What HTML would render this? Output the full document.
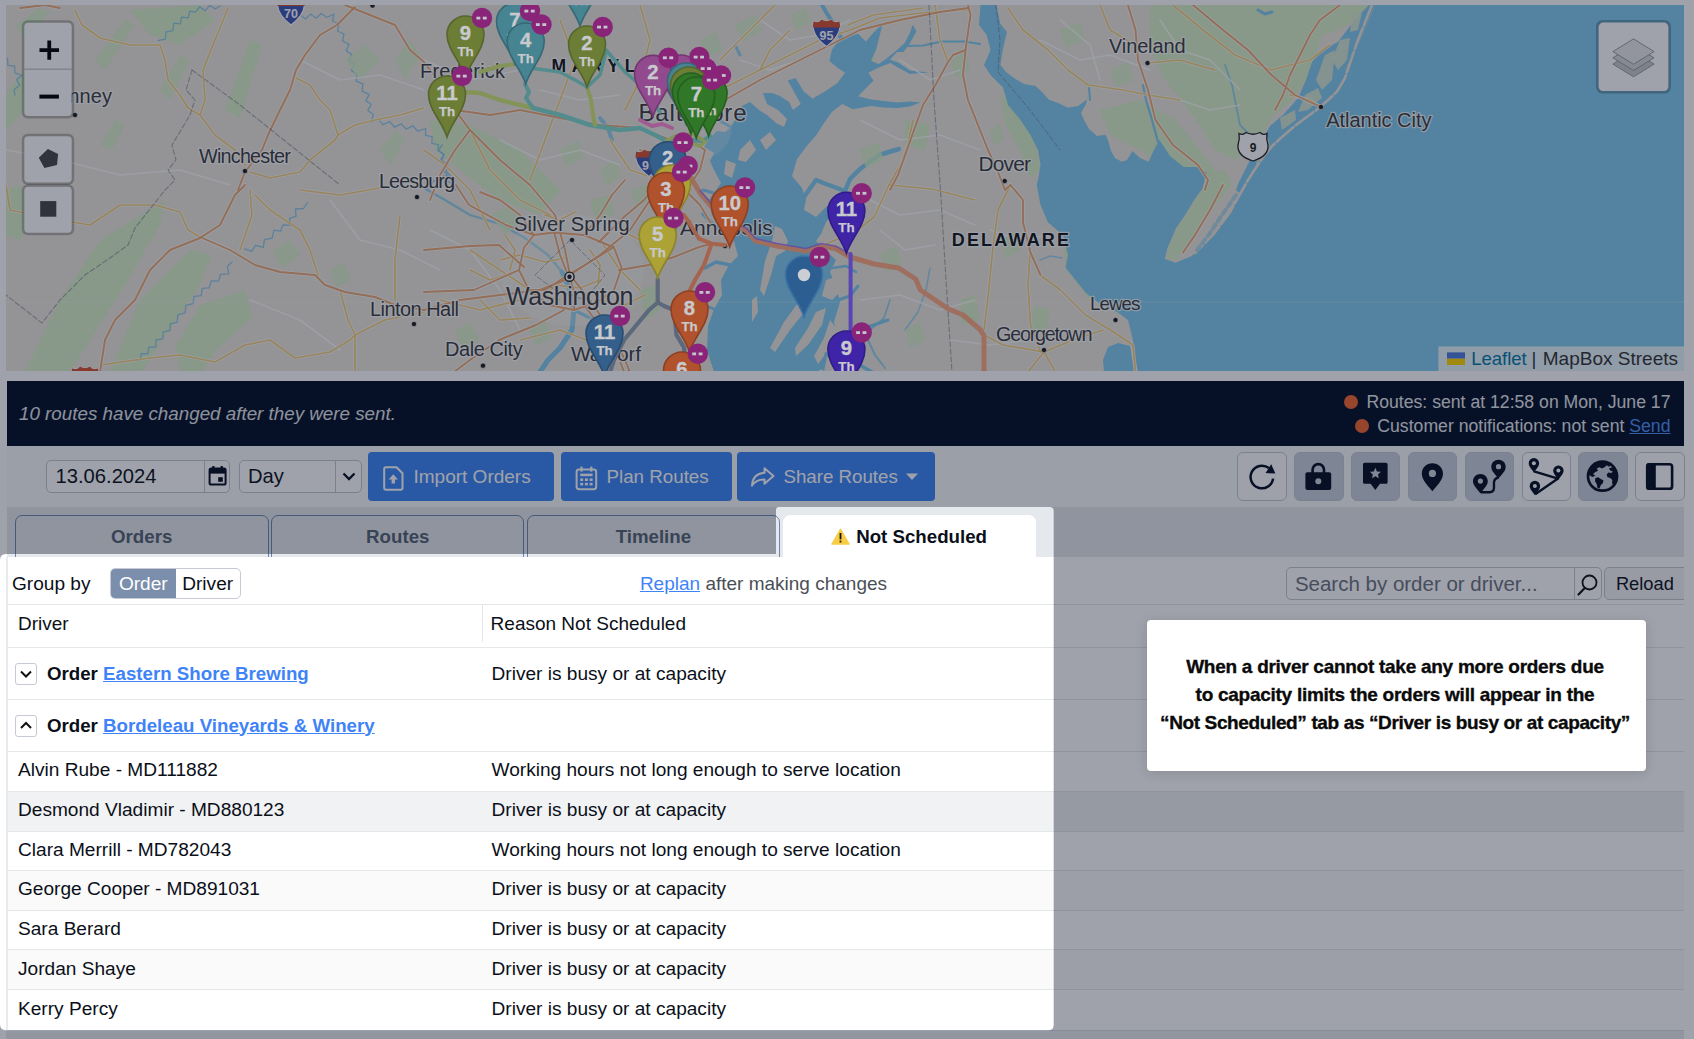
<!DOCTYPE html>
<html lang="en">
<head>
<meta charset="utf-8">
<title>Not Scheduled</title>
<style>
*{box-sizing:border-box;margin:0;padding:0}
html,body{width:1694px;height:1039px;overflow:hidden;background:#fff}
body{position:relative;font-family:"Liberation Sans",Arial,Helvetica,sans-serif;color:#0b0f19;font-size:18px}
.abs{position:absolute}
#map{left:6px;top:5px;width:1678px;height:366px;overflow:hidden;background:#efeeea}
#map svg{position:absolute;left:0;top:0}
.lbtn{position:absolute;background:#fff;border:2px solid #c9ccd1;border-radius:5px}
#bar{left:7px;top:381px;width:1677px;height:65px;background:#000c26;color:#e6e8ec}
#bar .msg{position:absolute;left:12px;top:22px;font-style:italic;font-size:18.8px;white-space:nowrap;color:#e1e4e8}
#bar .r{position:absolute;right:13.5px;white-space:nowrap;font-size:17.65px;color:#e6e8ec}
#bar .dot{display:inline-block;width:14px;height:14px;border-radius:50%;background:#f2652d;margin-right:8px;vertical-align:-1px}
#bar a{color:#4f8ff7;text-decoration:underline}
#tool{left:7px;top:446px;width:1677px;height:61px;background:#f9fafb}
.inp{position:absolute;top:14px;height:33px;border:1px solid #c3c7cf;border-radius:5px;background:#fff;font-size:20.2px;line-height:31px;padding-left:8.5px;white-space:nowrap;color:#0a0f1a}
.inp i{position:absolute;top:0;width:1px;height:31px;background:#c3c7cf}
.inp svg,.bbtn svg{position:absolute;top:0}
.bbtn{position:absolute;top:6px;height:49px;border-radius:4px;background:#3b84f5;color:#fff;font-size:19px;line-height:50px;white-space:nowrap}
.ibtn{position:absolute;top:6px;width:49.5px;height:49px;border-radius:6px;border:1px solid #c4c9d2;background:#fdfdfe}
.ibtn.on{background:#c9cfda;border-color:#c3c9d4}
.ibtn svg{position:absolute;left:0;top:0}
#tabs{left:7px;top:507px;width:1677px;height:50px;background:#e5e8ec}
.tab{position:absolute;top:8px;height:50px;width:253.2px;border:1.3px solid #6c87ad;border-radius:7px 7px 0 0;background:#e5e8ec;color:#566273;font-weight:bold;font-size:18.7px;text-align:center;line-height:42px;white-space:nowrap}
.tab.act{background:#fff;border-color:#fff;color:#0a0f1a}
.tab.act svg{vertical-align:-2px;margin-right:6px}
#panel{left:6.4px;top:557px;width:1677.6px;height:482px;background:#fff;border-left:2px solid #e8ebee;overflow:hidden}
.row{position:absolute;left:-0.4px;width:1677px;border-top:1px solid #e4e7ea}
.c1,.c2{position:absolute;white-space:nowrap;font-size:19.1px}
.c1{left:10px}.c2{left:483.5px}
a.lk{color:#3f83f8;font-weight:bold;text-decoration:underline}
.exp{position:absolute;left:8px;width:22px;height:22px;border:1px solid #c5cad6;border-radius:3px;background:#fff}

.row .c1,.row .c2{top:-2px}
.row.hd .c1,.row.hd .c2{font-size:19px}.row.hd .c1{top:-3.5px}.row.hd .c2{border-left:1px solid #e4e7ea;left:474px;padding-left:7.6px;height:37px;top:0;line-height:38px}
.row.g .c1{left:39px;top:-0.5px;font-size:18.7px}.row.g .c2{top:-0.5px}
.row.g .exp{left:-32px;top:15px}
.exp svg{position:absolute;left:0;top:0}
.grp{position:absolute;left:3.6px;top:15.5px;font-size:19.1px;white-space:nowrap}
.seg{position:absolute;left:102px;top:11px;height:31px;border:1px solid #c5cad6;border-radius:5px;overflow:hidden;font-size:19.1px;line-height:29px;white-space:nowrap;background:#fff}
.seg span{display:inline-block;padding:0 6.5px;height:29px}
.seg span.on{background:#7b8eab;color:#fff;padding:0 8px 0 7.5px}
.replan{position:absolute;left:631.5px;top:15.5px;font-size:19px;white-space:nowrap;color:#4a4f57}
.replan a{color:#3f83f8;text-decoration:underline}
.search{position:absolute;left:1277.5px;top:10px;width:316px;height:33px;border:1px solid #c3c7cf;border-radius:5px;background:#fff;font-size:20.5px;line-height:31px;padding-left:8px;color:#6b7280;white-space:nowrap}
.search i{position:absolute;right:26px;top:0;width:1px;height:31px;background:#c3c7cf}
.search svg{position:absolute;right:0;top:0}
.reload{position:absolute;left:1595.5px;top:10px;width:90px;height:33px;border:1px solid #c3c7cf;border-radius:5px;background:#f3f4f6;font-size:18.3px;line-height:31px;padding-left:11px}
#callout{left:1147px;top:620px;width:499px;height:151px;background:#fff;border-radius:4px;box-shadow:0 2px 12px rgba(0,0,0,.13);z-index:30;text-align:center;font-weight:bold;font-size:19px;line-height:28px;letter-spacing:-.27px;padding-top:32.5px;padding-right:3px;color:#0a0a0a;-webkit-text-stroke:.35px #0a0a0a;white-space:nowrap}
#callout span{letter-spacing:-.37px}
#dim{left:0;top:0;z-index:20;pointer-events:none}
</style>
</head>
<body>

<!-- MAP -->
<div id="map" class="abs">
<!--MAP_START-->
<svg width="1678" height="366" viewBox="6 5 1678 366" font-family="Liberation Sans, Arial, sans-serif">
<rect x="0" y="0" width="1700" height="380" fill="#ede8df"/>
<polygon points="1150,5 1372,5 1364,15 1347,25 1334,32 1322,35 1317,50 1312,70 1304,82 1297,95 1287,105 1272,117 1262,135 1250,150 1235,160 1215,150 1200,125 1185,105 1165,80 1150,50" fill="#d5f0c4" opacity="0.85"/>
<polygon points="1100,110 1140,100 1175,120 1200,150 1215,170 1200,188 1170,168 1140,150 1110,135" fill="#d5f0c4" opacity="0.85"/>
<polygon points="25,372 60,300 100,240 165,200 160,225 125,285 70,372" fill="#d5f0c4" opacity="0.85"/>
<polygon points="110,372 140,300 190,250 212,255 196,292 162,340 142,372" fill="#d5f0c4" opacity="0.85"/>
<polygon points="176,345 200,305 245,290 252,318 216,350 202,372 180,372" fill="#d5f0c4" opacity="0.85"/>
<polygon points="6,95 30,60 45,70 25,110 6,130" fill="#d5f0c4" opacity="0.85"/>
<polygon points="130,10 200,5 215,20 180,45 150,35" fill="#d5f0c4" opacity="0.85"/>
<polygon points="225,110 250,40 262,45 240,118" fill="#d5f0c4" opacity="0.85"/>
<polygon points="430,120 470,125 520,150 560,190 540,215 500,200 460,170 435,150" fill="#d5f0c4" opacity="0.85"/>
<polygon points="6,190 20,185 35,215 20,240 6,235" fill="#d5f0c4" opacity="0.85"/>
<polygon points="1000,95 1020,110 1035,140 1040,170 1030,178 1020,150 1005,125" fill="#d5f0c4" opacity="0.85"/>
<polygon points="1063,240 1080,275 1100,300 1090,300 1066,270" fill="#d5f0c4" opacity="0.85"/>
<polygon points="1166,258 1168,248 1176,229 1187,213 1195,199 1203,188 1207,173 1225,170 1232,185 1215,205 1200,228 1185,248 1176,260" fill="#d5f0c4" opacity="0.85"/>
<polygon points="866,58 872,50 876,62 868,72" fill="#d5f0c4" opacity="0.85"/>
<polygon points="905,120 930,125 925,150 905,145" fill="#d5f0c4" opacity="0.85"/>
<polygon points="960,300 975,295 980,320 962,325" fill="#d5f0c4" opacity="0.85"/>
<polygon points="1035,305 1050,310 1045,335 1030,330" fill="#d5f0c4" opacity="0.85"/>
<polygon points="590,200 610,195 615,215 595,220" fill="#d5f0c4" opacity="0.85"/>
<polygon points="640,290 655,285 660,310 645,320" fill="#d5f0c4" opacity="0.85"/>
<polygon points="980.5,5 979,25 986.7,35 990.5,50 984,65 990.5,75 1003,87.5 1008,105 1020.5,120 1030.5,135 1038,150 1040.5,165 1038,180 1036.7,185 1040.5,205 1048,222.5 1063,235 1068,255 1065.5,267.5 1075.5,280 1085.5,292.5 1098,302.5 1118,312.5 1128,320 1133,340 1135.5,360 1138,372 1684,372 1684,5 1369,5 1362,12 1350,26 1338,42 1322,50 1312,62 1306,80 1298,98 1284,114 1270,126 1262,140 1252,156 1244,172 1238,184 1236,190 1240,194 1229.5,213 1213.3,234.4 1191.7,256 1175.6,262.7 1164.8,258.7 1167.5,248 1175.6,229 1186.4,213 1194.4,199.4 1202.5,188.6 1206.6,172.5 1197,167 1183.7,167 1170,156 1159.4,140 1154,150 1148.6,161.7 1140,158 1132.5,151 1127,160 1121.7,161.7 1115,158 1111,151 1108,140 1105.5,134.7 1097,136 1089,129 1084,120 1081,113 1086,104 1089.3,89 1086.7,99.7 1078,106 1067.8,107.8 1058,103 1049,99.7 1042,92 1035.5,86 1024,84 1014,78 1006,72 1000.4,64.7 1003,48.5 1007,32 1000.4,24 996.4,5" fill="#80cbee" />
<polyline points="1372,5 1366,20 1358,40 1351,60 1345,78 1337,91.6 1327,101 1315.7,110.5 1304,119 1294,126.6 1282,137 1272.6,145.5 1264,156 1256.4,167 1248,180 1240,194 1229.5,213 1213.3,234.4 1195,253" fill="none" stroke="#ede8df" stroke-width="2.6" stroke-linejoin="round" stroke-linecap="round" stroke-dasharray="22 3"/>
<polygon points="1340,40 1350,38 1347,60 1338,70 1332,60" fill="#dce9cf" opacity="0.9"/>
<polygon points="1325,55 1335,50 1332,80 1322,90 1316,80" fill="#dce9cf" opacity="0.9"/>
<polygon points="1305,95 1318,88 1322,98 1308,110 1298,112" fill="#dce9cf" opacity="0.9"/>
<polygon points="1280,118 1295,110 1296,120 1282,130" fill="#dce9cf" opacity="0.9"/>
<polygon points="1258,150 1268,138 1270,146 1256,165" fill="#dce9cf" opacity="0.9"/>
<polygon points="1352,15 1362,12 1358,30 1350,32" fill="#dce9cf" opacity="0.9"/>
<polyline points="1236,195 1222,215 1210,233 1197,250" fill="none" stroke="#80cbee" stroke-width="4" stroke-linejoin="round" stroke-linecap="round" opacity="0.55" stroke-dasharray="5 4"/>
<polygon points="1108,347 1118,343 1130,346 1134,372 1104,372 1103,360" fill="#80cbee" />
<polyline points="1158,142 1152,120 1146,100 1143,85" fill="none" stroke="#80cbee" stroke-width="2.2" stroke-linejoin="round" stroke-linecap="round" />
<polyline points="1089,88 1090,100" fill="none" stroke="#80cbee" stroke-width="2" stroke-linejoin="round" stroke-linecap="round" />
<polyline points="1258,10 1265,14 1272,12" fill="none" stroke="#80cbee" stroke-width="3" stroke-linejoin="round" stroke-linecap="round" />
<polyline points="1225,65 1232,85 1236,105 1240,125 1250,135" fill="none" stroke="#80cbee" stroke-width="1.8" stroke-linejoin="round" stroke-linecap="round" opacity="0.8"/>
<polyline points="1040,260 1050,256 1062,258" fill="none" stroke="#80cbee" stroke-width="1.5" stroke-linejoin="round" stroke-linecap="round" opacity="0.7"/>
<polygon points="841,37.7 832,49.4 829.4,61 837.2,67.6 845,72.8 837.2,83.2 825.5,91 812.5,98.8 803.4,91 795.6,78 787.8,80.6 793,90 800.8,104 793,110 789,102 780,96 772,93 763,93 767,104 778,110 787,119 784,127 776,123 767,115 759,110 750,102 742,106 738,115 731,127 725,132 717,131 710,138 704,147 714,153 710,161 714,170 721,183 714,193 709,200 712,215 722,232 734,241 738,256 729,265 721,280 722,295 714,309 708,326 707,350 714,372 824,372 828,352 838,338 834,322 840,302 836,286 830,272 836,260 825,250 816,241 821,234 826,222 840,207 835,200 826,207 816,217 804,210 806,200 802,188 792,176 797,159 806,147 816.4,135 822.9,124.8 832,111.8 842.4,104 852.8,109.2 871,106 884,107.5 897,108 910,106.5 920.4,102.5 910,101.5 897,102.5 884,101 871,99.5 858,96.2 873.6,80.6 868.4,72.8 878.8,67.6 890.5,63 897,67 910,74 929,72.5 910,70.5 899,63 890,59.5 897,52 903.5,52 910,42.9 916.5,31.2 912.6,24.7 910,32.5 904.8,42.9 897,50 886.6,58.5 878.8,64 871,61 876.2,49.4 878.8,39 882.7,23.4 873.6,32.5 865.8,41.6 858,33.8" fill="#80cbee" />
<polyline points="841,38 834,24 826,12 822,5" fill="none" stroke="#80cbee" stroke-width="4" stroke-linejoin="round" stroke-linecap="round" />
<polyline points="905,46 923,45.5 942,41.6 964.5,41.6 980,44" fill="none" stroke="#80cbee" stroke-width="2" stroke-linejoin="round" stroke-linecap="round" />
<polygon points="775,226 782,229 788,241 785,251 776,256 771,275 764,296 760,290 765,261 772,241" fill="#ede8df" />
<polygon points="800,300 812,296 806,310 790,330 775,352 770,348 784,322" fill="#ede8df" />
<polygon points="816,312 826,308 822,325 808,345 796,356 795,348 808,328" fill="#ede8df" />
<polygon points="830,320 838,330 830,348 818,364 814,356 824,338" fill="#ede8df" />
<polygon points="798,262 810,258 822,262 818,272 806,282 796,290 792,282 800,272" fill="#ede8df" />
<polygon points="826,280 838,276 842,290 832,300 822,296" fill="#ede8df" />
<polygon points="752,300 757,296 758,312 752,322" fill="#ede8df" />
<polygon points="760,140 770,132 776,140 766,150" fill="#ede8df" />
<polygon points="740,150 750,140 756,150 746,162 738,160" fill="#ede8df" />
<polygon points="726,160 736,164 732,178 724,174" fill="#ede8df" />
<polyline points="804,197 816,180 826,184 845,191 850,179 860,169 879,155 899,149" fill="none" stroke="#80cbee" stroke-width="4.5" stroke-linejoin="round" stroke-linecap="round" />
<polyline points="836,338 852,334 868,327 888,320" fill="none" stroke="#80cbee" stroke-width="3" stroke-linejoin="round" stroke-linecap="round" />
<polyline points="838,300 850,296 858,286" fill="none" stroke="#80cbee" stroke-width="3" stroke-linejoin="round" stroke-linecap="round" />
<polyline points="832,268 846,266 856,272" fill="none" stroke="#80cbee" stroke-width="2.5" stroke-linejoin="round" stroke-linecap="round" />
<polyline points="826,354 842,358 858,364 872,372" fill="none" stroke="#80cbee" stroke-width="3.5" stroke-linejoin="round" stroke-linecap="round" />
<polyline points="722,232 712,223 703,214" fill="none" stroke="#80cbee" stroke-width="3.5" stroke-linejoin="round" stroke-linecap="round" />
<polyline points="730,265 716,262 705,268" fill="none" stroke="#80cbee" stroke-width="3.5" stroke-linejoin="round" stroke-linecap="round" />
<polyline points="714,193 703,190" fill="none" stroke="#80cbee" stroke-width="3" stroke-linejoin="round" stroke-linecap="round" />
<polyline points="714,309 704,305 698,298" fill="none" stroke="#80cbee" stroke-width="2.5" stroke-linejoin="round" stroke-linecap="round" />
<polyline points="731,127 722,122 716,116" fill="none" stroke="#80cbee" stroke-width="3" stroke-linejoin="round" stroke-linecap="round" />
<polyline points="890,300 884,318 870,330" fill="none" stroke="#80cbee" stroke-width="1.8" stroke-linejoin="round" stroke-linecap="round" opacity=".8"/>
<polyline points="930,268 926,290 918,312 905,330" fill="none" stroke="#80cbee" stroke-width="1.6" stroke-linejoin="round" stroke-linecap="round" opacity=".7"/>
<polyline points="868,340 875,355 885,368" fill="none" stroke="#80cbee" stroke-width="2" stroke-linejoin="round" stroke-linecap="round" opacity=".8"/>
<polyline points="424,188 445,200 470,215 500,224 525,238 548,255 562,272" fill="none" stroke="#80cbee" stroke-width="2.2" stroke-linejoin="round" stroke-linecap="round" opacity=".8"/>
<polyline points="562,272 570,290 574,310 572,330 560,348 548,360 540,372" fill="none" stroke="#80cbee" stroke-width="5" stroke-linejoin="round" stroke-linecap="round" />
<polyline points="574,310 590,318 598,330" fill="none" stroke="#80cbee" stroke-width="3.5" stroke-linejoin="round" stroke-linecap="round" />
<polyline points="600,118 608,128 612,140" fill="none" stroke="#80cbee" stroke-width="4" stroke-linejoin="round" stroke-linecap="round" opacity=".8"/>
<polyline points="735,45 740,55" fill="none" stroke="#80cbee" stroke-width="3" stroke-linejoin="round" stroke-linecap="round" opacity=".8"/>
<polyline points="133.6,360.3 140.2,360.4 141.2,353.7 147.8,353.8 148.8,347.1 155.7,347 155.9,340 162.8,338.8 163.1,331.8 170,330.6 170.3,323.6 177.2,322.4 177.8,314.8 185.2,312.9 185.9,305.3 193.1,303.6 194.1,296.4 201.2,295.6 202.2,288.4 209.1,287.8 211.3,280.9 218.5,281.2 220.7,274.3 228.7,273.8 227.4,266.4 232,262" fill="none" stroke="#7fc3ea" stroke-width="1.3" stroke-linejoin="round" stroke-linecap="round" opacity=".85"/>
<polyline points="244.8,248.9 251.6,251.4 255.6,245.4 263.3,247.3 264.5,239.7 272.2,238.1 273.9,230.1 280.7,231.2 283,224.8 290.6,225.2 289.5,218.4 296,216.4 295.5,209 303.5,208.5 307.5,202.7" fill="none" stroke="#7fc3ea" stroke-width="1.3" stroke-linejoin="round" stroke-linecap="round" opacity=".85"/>
<polyline points="158.4,40.5 165.4,39.2 165.9,32 172.9,30.7 173.7,23.2 180.3,23.8 181.7,17.2 188.3,17.8 189.7,11.2 195.3,12.2 199.7,7 205.3,10.6 209.7,5.4 215.3,9 220,6" fill="none" stroke="#7fc3ea" stroke-width="1.3" stroke-linejoin="round" stroke-linecap="round" opacity=".85"/>
<polyline points="299.9,14.8 305.5,18.9 310.5,14.1 316.1,18.2 321.2,13.5 326.8,17.5 334,14 332.5,21 339,24 337.5,31 344,34 342.5,41 349.1,44.4 346.2,50.6 351.8,54.4 348.9,60.6 354.5,64.4 351.5,70.6 356.9,73.9 356.1,81.1 362.9,83.9 362.1,91.1 369.2,94.6 365.8,100.4 371.2,104.6 367.8,110.4 373.2,114.6 371.5,122.1 378.2,119.1 383,124.6 389.7,121.6 394.6,127.2 401.2,123.8 406.2,129.2 412.8,125.8 417.8,131.2 425.7,128.6 425.5,135.4 432.1,136.6 431.9,143.4 438.5,144.6 438,150.8 444,154.2 442,160.8 448,164.2 446,170.8 451,177 443.8,175.6 440.6,182.2 433.4,180.8 430.2,187.4 424,188" fill="none" stroke="#7fc3ea" stroke-width="1.3" stroke-linejoin="round" stroke-linecap="round" opacity=".85"/>
<polyline points="7.6,58.5 7.9,65.3 14.6,66 14.9,72.8 22.1,75.5 16.6,79.5 19.6,85.5 14.1,89.5 15,95" fill="none" stroke="#7fc3ea" stroke-width="1.3" stroke-linejoin="round" stroke-linecap="round" opacity=".85"/>
<polyline points="442.2,144.6 438.7,150.4 443.8,154.6 440.3,160.4 445.5,164.6 442,170.4 446.8,173.8 446.5,181.2 453.5,183.8 455,190" fill="none" stroke="#7fc3ea" stroke-width="1.3" stroke-linejoin="round" stroke-linecap="round" opacity=".85"/>
<polygon points="15,25 40,8 50,12 25,40" fill="#d5f0c4" opacity="0.8"/>
<polygon points="95,60 125,20 135,25 105,70" fill="#d5f0c4" opacity="0.8"/>
<polygon points="160,90 180,55 190,60 170,100" fill="#d5f0c4" opacity="0.8"/>
<polygon points="345,60 365,45 380,60 360,80" fill="#d5f0c4" opacity="0.8"/>
<polygon points="395,60 410,40 420,55 405,80" fill="#d5f0c4" opacity="0.8"/>
<polygon points="380,150 395,130 405,140 390,165" fill="#d5f0c4" opacity="0.8"/>
<polygon points="100,145 115,120 125,125 112,150" fill="#d5f0c4" opacity="0.8"/>
<polygon points="272,250 290,240 300,255 282,268" fill="#d5f0c4" opacity="0.8"/>
<polygon points="330,270 345,262 350,280 336,288" fill="#d5f0c4" opacity="0.8"/>
<polygon points="490,215 510,205 525,220 505,235" fill="#d5f0c4" opacity="0.8"/>
<polygon points="455,330 470,322 480,340 462,350" fill="#d5f0c4" opacity="0.8"/>
<polygon points="530,330 545,320 552,338 536,346" fill="#d5f0c4" opacity="0.8"/>
<polygon points="600,170 615,160 622,176 606,186" fill="#d5f0c4" opacity="0.8"/>
<polygon points="630,190 648,184 652,200 636,206" fill="#d5f0c4" opacity="0.8"/>
<polygon points="560,150 578,140 584,158 566,166" fill="#d5f0c4" opacity="0.8"/>
<polygon points="735,25 755,15 762,30 742,42" fill="#d5f0c4" opacity="0.8"/>
<polygon points="790,15 805,8 812,22 796,30" fill="#d5f0c4" opacity="0.8"/>
<polygon points="860,150 878,142 884,160 866,168" fill="#d5f0c4" opacity="0.8"/>
<polygon points="880,255 896,246 902,264 886,272" fill="#d5f0c4" opacity="0.8"/>
<polygon points="905,330 920,322 926,340 910,348" fill="#d5f0c4" opacity="0.8"/>
<polygon points="1000,240 1015,232 1020,250 1006,258" fill="#d5f0c4" opacity="0.8"/>
<polygon points="990,130 1000,124 1004,140 994,146" fill="#d5f0c4" opacity="0.8"/>
<polygon points="950,60 966,52 970,70 956,78" fill="#d5f0c4" opacity="0.8"/>
<polygon points="1060,30 1080,22 1086,40 1066,48" fill="#d5f0c4" opacity="0.8"/>
<polygon points="1110,70 1128,62 1134,80 1116,88" fill="#d5f0c4" opacity="0.8"/>
<polygon points="700,40 716,32 722,50 706,58" fill="#d5f0c4" opacity="0.8"/>
<rect x="0" y="301.6" width="1700" height="1" fill="#fff" opacity=".28"/>
<polyline points="6,150 60,160 120,175 180,170 230,185" fill="none" stroke="#ffffff" stroke-width="1.6" stroke-linejoin="round" stroke-linecap="round" opacity=".75"/>
<polyline points="300,60 340,80 380,75 424,90" fill="none" stroke="#ffffff" stroke-width="1.6" stroke-linejoin="round" stroke-linecap="round" opacity=".75"/>
<polyline points="424,60 470,80 520,70" fill="none" stroke="#ffffff" stroke-width="1.6" stroke-linejoin="round" stroke-linecap="round" opacity=".75"/>
<polyline points="330,200 360,240 400,250 440,270" fill="none" stroke="#ffffff" stroke-width="1.6" stroke-linejoin="round" stroke-linecap="round" opacity=".75"/>
<polyline points="250,300 300,320 340,350" fill="none" stroke="#ffffff" stroke-width="1.6" stroke-linejoin="round" stroke-linecap="round" opacity=".75"/>
<polyline points="860,120 900,140 940,135 980,150" fill="none" stroke="#ffffff" stroke-width="1.6" stroke-linejoin="round" stroke-linecap="round" opacity=".75"/>
<polyline points="870,200 900,215 940,210 975,225" fill="none" stroke="#ffffff" stroke-width="1.6" stroke-linejoin="round" stroke-linecap="round" opacity=".75"/>
<polyline points="860,300 900,295 940,310 975,300" fill="none" stroke="#ffffff" stroke-width="1.6" stroke-linejoin="round" stroke-linecap="round" opacity=".75"/>
<polyline points="950,340 990,345 1030,340" fill="none" stroke="#ffffff" stroke-width="1.6" stroke-linejoin="round" stroke-linecap="round" opacity=".75"/>
<polyline points="1040,40 1080,60 1110,55 1150,70" fill="none" stroke="#ffffff" stroke-width="1.6" stroke-linejoin="round" stroke-linecap="round" opacity=".75"/>
<polyline points="1060,20 1090,45 1100,80" fill="none" stroke="#ffffff" stroke-width="1.6" stroke-linejoin="round" stroke-linecap="round" opacity=".75"/>
<polyline points="1160,20 1180,50 1210,60 1240,90" fill="none" stroke="#ffffff" stroke-width="1.6" stroke-linejoin="round" stroke-linecap="round" opacity=".75"/>
<polyline points="1180,100 1210,110 1240,105" fill="none" stroke="#ffffff" stroke-width="1.6" stroke-linejoin="round" stroke-linecap="round" opacity=".75"/>
<polyline points="760,20 790,40 820,35 850,20" fill="none" stroke="#ffffff" stroke-width="1.6" stroke-linejoin="round" stroke-linecap="round" opacity=".75"/>
<polyline points="740,60 770,70 800,60" fill="none" stroke="#ffffff" stroke-width="1.6" stroke-linejoin="round" stroke-linecap="round" opacity=".75"/>
<polyline points="500,140 540,160 580,150 620,165" fill="none" stroke="#ffffff" stroke-width="1.6" stroke-linejoin="round" stroke-linecap="round" opacity=".75"/>
<polyline points="430,230 470,250 500,290 520,330" fill="none" stroke="#ffffff" stroke-width="1.6" stroke-linejoin="round" stroke-linecap="round" opacity=".75"/>
<polyline points="540,90 580,100 620,95" fill="none" stroke="#ffffff" stroke-width="1.6" stroke-linejoin="round" stroke-linecap="round" opacity=".75"/>
<polyline points="900,60 930,80 960,70" fill="none" stroke="#ffffff" stroke-width="1.6" stroke-linejoin="round" stroke-linecap="round" opacity=".75"/>
<polyline points="880,230 905,250 935,245" fill="none" stroke="#ffffff" stroke-width="1.6" stroke-linejoin="round" stroke-linecap="round" opacity=".75"/>
<polyline points="990,230 1020,240 1050,235" fill="none" stroke="#ffffff" stroke-width="1.6" stroke-linejoin="round" stroke-linecap="round" opacity=".75"/>
<ellipse cx="572" cy="270" rx="72" ry="56" fill="#fff" opacity=".22"/><ellipse cx="690" cy="128" rx="42" ry="34" fill="#fff" opacity=".2"/>
<polyline points="75,10 82,25 100,38 130,45 160,45 165,60 168,80 180,95 188,108 200,115 215,135 235,150 245,165" fill="none" stroke="#fff" stroke-width="3.2" stroke-linejoin="round" stroke-linecap="round" opacity=".7"/>
<polyline points="228,8 215,40 203,70 205,100 200,115" fill="none" stroke="#fff" stroke-width="3.2" stroke-linejoin="round" stroke-linecap="round" opacity=".7"/>
<polyline points="296,78 310,85 320,100 330,110 338,135 335,140 310,160 300,172 270,178 250,172" fill="none" stroke="#fff" stroke-width="3.2" stroke-linejoin="round" stroke-linecap="round" opacity=".7"/>
<polyline points="338,135 355,125 375,120 400,115 424,108" fill="none" stroke="#fff" stroke-width="3.2" stroke-linejoin="round" stroke-linecap="round" opacity=".7"/>
<polyline points="6,185 10,210 60,220 90,225 120,205 155,205 180,212 188,230 200,237" fill="none" stroke="#fff" stroke-width="3.2" stroke-linejoin="round" stroke-linecap="round" opacity=".7"/>
<polyline points="250,190 252,215 240,250" fill="none" stroke="#fff" stroke-width="3.2" stroke-linejoin="round" stroke-linecap="round" opacity=".7"/>
<polyline points="255,195 270,210 300,230 310,250 318,275" fill="none" stroke="#fff" stroke-width="3.2" stroke-linejoin="round" stroke-linecap="round" opacity=".7"/>
<polyline points="100,365 150,358 180,355 215,362 245,345 270,340 295,358 330,352 350,340 355,335" fill="none" stroke="#fff" stroke-width="3.2" stroke-linejoin="round" stroke-linecap="round" opacity=".7"/>
<polyline points="340,290 348,320 355,335 355,372" fill="none" stroke="#fff" stroke-width="3.2" stroke-linejoin="round" stroke-linecap="round" opacity=".7"/>
<polyline points="355,335 385,320 424,312" fill="none" stroke="#fff" stroke-width="3.2" stroke-linejoin="round" stroke-linecap="round" opacity=".7"/>
<polyline points="400,215 395,260 395,300" fill="none" stroke="#fff" stroke-width="3.2" stroke-linejoin="round" stroke-linecap="round" opacity=".7"/>
<polyline points="300,190 340,195 380,188" fill="none" stroke="#fff" stroke-width="3.2" stroke-linejoin="round" stroke-linecap="round" opacity=".7"/>
<polyline points="470,130 490,170 520,200 550,215" fill="none" stroke="#fff" stroke-width="3.2" stroke-linejoin="round" stroke-linecap="round" opacity=".7"/>
<polyline points="560,20 575,60 560,100 545,140 530,180" fill="none" stroke="#fff" stroke-width="3.2" stroke-linejoin="round" stroke-linecap="round" opacity=".7"/>
<polyline points="640,5 650,40 640,80 625,110" fill="none" stroke="#fff" stroke-width="3.2" stroke-linejoin="round" stroke-linecap="round" opacity=".7"/>
<polyline points="610,140 630,170 660,180" fill="none" stroke="#fff" stroke-width="3.2" stroke-linejoin="round" stroke-linecap="round" opacity=".7"/>
<polyline points="424,150 445,165 470,190 490,230" fill="none" stroke="#fff" stroke-width="3.2" stroke-linejoin="round" stroke-linecap="round" opacity=".7"/>
<polyline points="700,100 730,85 760,70 790,55 820,40 850,30 880,18 930,12 968,10" fill="none" stroke="#fff" stroke-width="3.2" stroke-linejoin="round" stroke-linecap="round" opacity=".7"/>
<polyline points="720,60 740,40 760,20 775,5" fill="none" stroke="#fff" stroke-width="3.2" stroke-linejoin="round" stroke-linecap="round" opacity=".7"/>
<polyline points="760,70 770,50 790,30" fill="none" stroke="#fff" stroke-width="3.2" stroke-linejoin="round" stroke-linecap="round" opacity=".7"/>
<polyline points="913,120 908,144 901,164 889,185 874,217 855,232 826,244" fill="none" stroke="#fff" stroke-width="3.2" stroke-linejoin="round" stroke-linecap="round" opacity=".7"/>
<polyline points="889,185 932,189 975,200" fill="none" stroke="#fff" stroke-width="3.2" stroke-linejoin="round" stroke-linecap="round" opacity=".7"/>
<polyline points="1010.5,185 998,210 993,247 988,297 984,330" fill="none" stroke="#fff" stroke-width="3.2" stroke-linejoin="round" stroke-linecap="round" opacity=".7"/>
<polyline points="1030,252 1028,285 1030.5,325 1040.5,352" fill="none" stroke="#fff" stroke-width="3.2" stroke-linejoin="round" stroke-linecap="round" opacity=".7"/>
<polyline points="1040,275 1060.5,290 1085.5,315 1110.5,330 1133,345 1135.5,372" fill="none" stroke="#fff" stroke-width="3.2" stroke-linejoin="round" stroke-linecap="round" opacity=".7"/>
<polyline points="984,335 1003,345 1044,352 1073,340 1103,330" fill="none" stroke="#fff" stroke-width="3.2" stroke-linejoin="round" stroke-linecap="round" opacity=".7"/>
<polyline points="1044,352 1055.5,372" fill="none" stroke="#fff" stroke-width="3.2" stroke-linejoin="round" stroke-linecap="round" opacity=".7"/>
<polyline points="1044,352 1028,372" fill="none" stroke="#fff" stroke-width="3.2" stroke-linejoin="round" stroke-linecap="round" opacity=".7"/>
<polyline points="848,25 873,15 923,8" fill="none" stroke="#fff" stroke-width="3.2" stroke-linejoin="round" stroke-linecap="round" opacity=".7"/>
<polyline points="935,5 940,40 948,62" fill="none" stroke="#fff" stroke-width="3.2" stroke-linejoin="round" stroke-linecap="round" opacity=".7"/>
<polyline points="1008,8 1023,30 1048,50 1068,70 1088,85 1123,90 1148,95 1180,100" fill="none" stroke="#fff" stroke-width="3.2" stroke-linejoin="round" stroke-linecap="round" opacity=".7"/>
<polyline points="1173,5 1203,30 1235,55 1271,70 1310,60 1330,45" fill="none" stroke="#fff" stroke-width="3.2" stroke-linejoin="round" stroke-linecap="round" opacity=".7"/>
<polyline points="1100,5 1110,30 1135,45" fill="none" stroke="#fff" stroke-width="3.2" stroke-linejoin="round" stroke-linecap="round" opacity=".7"/>
<polyline points="1148,63 1180,60 1215,70" fill="none" stroke="#fff" stroke-width="3.2" stroke-linejoin="round" stroke-linecap="round" opacity=".7"/>
<polyline points="1290,95 1310,100 1321,107" fill="none" stroke="#fff" stroke-width="3.2" stroke-linejoin="round" stroke-linecap="round" opacity=".7"/>
<polyline points="470,250 500,270 530,290 560,300" fill="none" stroke="#fff" stroke-width="3.2" stroke-linejoin="round" stroke-linecap="round" opacity=".7"/>
<polyline points="440,300 480,310 520,300" fill="none" stroke="#fff" stroke-width="3.2" stroke-linejoin="round" stroke-linecap="round" opacity=".7"/>
<polyline points="600,240 620,270 640,290" fill="none" stroke="#fff" stroke-width="3.2" stroke-linejoin="round" stroke-linecap="round" opacity=".7"/>
<polyline points="520,340 560,330 600,345" fill="none" stroke="#fff" stroke-width="3.2" stroke-linejoin="round" stroke-linecap="round" opacity=".7"/>
<polyline points="500,260 520,255 545,262 565,258" fill="none" stroke="#fff" stroke-width="3.2" stroke-linejoin="round" stroke-linecap="round" opacity=".7"/>
<polyline points="540,300 555,285 580,288 600,280" fill="none" stroke="#fff" stroke-width="3.2" stroke-linejoin="round" stroke-linecap="round" opacity=".7"/>
<polyline points="590,250 600,265 598,285" fill="none" stroke="#fff" stroke-width="3.2" stroke-linejoin="round" stroke-linecap="round" opacity=".7"/>
<polyline points="480,300 500,320 530,318" fill="none" stroke="#fff" stroke-width="3.2" stroke-linejoin="round" stroke-linecap="round" opacity=".7"/>
<polyline points="600,300 625,305 645,295" fill="none" stroke="#fff" stroke-width="3.2" stroke-linejoin="round" stroke-linecap="round" opacity=".7"/>
<polyline points="505,235 515,250 510,270" fill="none" stroke="#fff" stroke-width="3.2" stroke-linejoin="round" stroke-linecap="round" opacity=".7"/>
<polyline points="620,230 640,240 655,235" fill="none" stroke="#fff" stroke-width="3.2" stroke-linejoin="round" stroke-linecap="round" opacity=".7"/>
<polyline points="545,215 560,220 575,212" fill="none" stroke="#fff" stroke-width="3.2" stroke-linejoin="round" stroke-linecap="round" opacity=".7"/>
<polyline points="590,320 605,335 600,355" fill="none" stroke="#fff" stroke-width="3.2" stroke-linejoin="round" stroke-linecap="round" opacity=".7"/>
<polyline points="470,270 490,280 505,275" fill="none" stroke="#fff" stroke-width="3.2" stroke-linejoin="round" stroke-linecap="round" opacity=".7"/>
<polyline points="75,10 82,25 100,38 130,45 160,45 165,60 168,80 180,95 188,108 200,115 215,135 235,150 245,165" fill="none" stroke="#f5cf7c" stroke-width="1.7" stroke-linejoin="round" stroke-linecap="round" />
<polyline points="228,8 215,40 203,70 205,100 200,115" fill="none" stroke="#f5cf7c" stroke-width="1.7" stroke-linejoin="round" stroke-linecap="round" />
<polyline points="296,78 310,85 320,100 330,110 338,135 335,140 310,160 300,172 270,178 250,172" fill="none" stroke="#f5cf7c" stroke-width="1.7" stroke-linejoin="round" stroke-linecap="round" />
<polyline points="338,135 355,125 375,120 400,115 424,108" fill="none" stroke="#f5cf7c" stroke-width="1.7" stroke-linejoin="round" stroke-linecap="round" />
<polyline points="6,185 10,210 60,220 90,225 120,205 155,205 180,212 188,230 200,237" fill="none" stroke="#f5cf7c" stroke-width="1.7" stroke-linejoin="round" stroke-linecap="round" />
<polyline points="250,190 252,215 240,250" fill="none" stroke="#f5cf7c" stroke-width="1.7" stroke-linejoin="round" stroke-linecap="round" />
<polyline points="255,195 270,210 300,230 310,250 318,275" fill="none" stroke="#f5cf7c" stroke-width="1.7" stroke-linejoin="round" stroke-linecap="round" />
<polyline points="100,365 150,358 180,355 215,362 245,345 270,340 295,358 330,352 350,340 355,335" fill="none" stroke="#f5cf7c" stroke-width="1.7" stroke-linejoin="round" stroke-linecap="round" />
<polyline points="340,290 348,320 355,335 355,372" fill="none" stroke="#f5cf7c" stroke-width="1.7" stroke-linejoin="round" stroke-linecap="round" />
<polyline points="355,335 385,320 424,312" fill="none" stroke="#f5cf7c" stroke-width="1.7" stroke-linejoin="round" stroke-linecap="round" />
<polyline points="400,215 395,260 395,300" fill="none" stroke="#f5cf7c" stroke-width="1.7" stroke-linejoin="round" stroke-linecap="round" />
<polyline points="300,190 340,195 380,188" fill="none" stroke="#f5cf7c" stroke-width="1.7" stroke-linejoin="round" stroke-linecap="round" />
<polyline points="470,130 490,170 520,200 550,215" fill="none" stroke="#f5cf7c" stroke-width="1.7" stroke-linejoin="round" stroke-linecap="round" />
<polyline points="560,20 575,60 560,100 545,140 530,180" fill="none" stroke="#f5cf7c" stroke-width="1.7" stroke-linejoin="round" stroke-linecap="round" />
<polyline points="640,5 650,40 640,80 625,110" fill="none" stroke="#f5cf7c" stroke-width="1.7" stroke-linejoin="round" stroke-linecap="round" />
<polyline points="610,140 630,170 660,180" fill="none" stroke="#f5cf7c" stroke-width="1.7" stroke-linejoin="round" stroke-linecap="round" />
<polyline points="424,150 445,165 470,190 490,230" fill="none" stroke="#f5cf7c" stroke-width="1.7" stroke-linejoin="round" stroke-linecap="round" />
<polyline points="700,100 730,85 760,70 790,55 820,40 850,30 880,18 930,12 968,10" fill="none" stroke="#f5cf7c" stroke-width="1.7" stroke-linejoin="round" stroke-linecap="round" />
<polyline points="720,60 740,40 760,20 775,5" fill="none" stroke="#f5cf7c" stroke-width="1.7" stroke-linejoin="round" stroke-linecap="round" />
<polyline points="760,70 770,50 790,30" fill="none" stroke="#f5cf7c" stroke-width="1.7" stroke-linejoin="round" stroke-linecap="round" />
<polyline points="913,120 908,144 901,164 889,185 874,217 855,232 826,244" fill="none" stroke="#f5cf7c" stroke-width="1.7" stroke-linejoin="round" stroke-linecap="round" />
<polyline points="889,185 932,189 975,200" fill="none" stroke="#f5cf7c" stroke-width="1.7" stroke-linejoin="round" stroke-linecap="round" />
<polyline points="1010.5,185 998,210 993,247 988,297 984,330" fill="none" stroke="#f5cf7c" stroke-width="1.7" stroke-linejoin="round" stroke-linecap="round" />
<polyline points="1030,252 1028,285 1030.5,325 1040.5,352" fill="none" stroke="#f5cf7c" stroke-width="1.7" stroke-linejoin="round" stroke-linecap="round" />
<polyline points="1040,275 1060.5,290 1085.5,315 1110.5,330 1133,345 1135.5,372" fill="none" stroke="#f5cf7c" stroke-width="1.7" stroke-linejoin="round" stroke-linecap="round" />
<polyline points="984,335 1003,345 1044,352 1073,340 1103,330" fill="none" stroke="#f5cf7c" stroke-width="1.7" stroke-linejoin="round" stroke-linecap="round" />
<polyline points="1044,352 1055.5,372" fill="none" stroke="#f5cf7c" stroke-width="1.7" stroke-linejoin="round" stroke-linecap="round" />
<polyline points="1044,352 1028,372" fill="none" stroke="#f5cf7c" stroke-width="1.7" stroke-linejoin="round" stroke-linecap="round" />
<polyline points="848,25 873,15 923,8" fill="none" stroke="#f5cf7c" stroke-width="1.7" stroke-linejoin="round" stroke-linecap="round" />
<polyline points="935,5 940,40 948,62" fill="none" stroke="#f5cf7c" stroke-width="1.7" stroke-linejoin="round" stroke-linecap="round" />
<polyline points="1008,8 1023,30 1048,50 1068,70 1088,85 1123,90 1148,95 1180,100" fill="none" stroke="#f5cf7c" stroke-width="1.7" stroke-linejoin="round" stroke-linecap="round" />
<polyline points="1173,5 1203,30 1235,55 1271,70 1310,60 1330,45" fill="none" stroke="#f5cf7c" stroke-width="1.7" stroke-linejoin="round" stroke-linecap="round" />
<polyline points="1100,5 1110,30 1135,45" fill="none" stroke="#f5cf7c" stroke-width="1.7" stroke-linejoin="round" stroke-linecap="round" />
<polyline points="1148,63 1180,60 1215,70" fill="none" stroke="#f5cf7c" stroke-width="1.7" stroke-linejoin="round" stroke-linecap="round" />
<polyline points="1290,95 1310,100 1321,107" fill="none" stroke="#f5cf7c" stroke-width="1.7" stroke-linejoin="round" stroke-linecap="round" />
<polyline points="470,250 500,270 530,290 560,300" fill="none" stroke="#f5cf7c" stroke-width="1.7" stroke-linejoin="round" stroke-linecap="round" />
<polyline points="440,300 480,310 520,300" fill="none" stroke="#f5cf7c" stroke-width="1.7" stroke-linejoin="round" stroke-linecap="round" />
<polyline points="600,240 620,270 640,290" fill="none" stroke="#f5cf7c" stroke-width="1.7" stroke-linejoin="round" stroke-linecap="round" />
<polyline points="520,340 560,330 600,345" fill="none" stroke="#f5cf7c" stroke-width="1.7" stroke-linejoin="round" stroke-linecap="round" />
<polyline points="500,260 520,255 545,262 565,258" fill="none" stroke="#f5cf7c" stroke-width="1.7" stroke-linejoin="round" stroke-linecap="round" />
<polyline points="540,300 555,285 580,288 600,280" fill="none" stroke="#f5cf7c" stroke-width="1.7" stroke-linejoin="round" stroke-linecap="round" />
<polyline points="590,250 600,265 598,285" fill="none" stroke="#f5cf7c" stroke-width="1.7" stroke-linejoin="round" stroke-linecap="round" />
<polyline points="480,300 500,320 530,318" fill="none" stroke="#f5cf7c" stroke-width="1.7" stroke-linejoin="round" stroke-linecap="round" />
<polyline points="600,300 625,305 645,295" fill="none" stroke="#f5cf7c" stroke-width="1.7" stroke-linejoin="round" stroke-linecap="round" />
<polyline points="505,235 515,250 510,270" fill="none" stroke="#f5cf7c" stroke-width="1.7" stroke-linejoin="round" stroke-linecap="round" />
<polyline points="620,230 640,240 655,235" fill="none" stroke="#f5cf7c" stroke-width="1.7" stroke-linejoin="round" stroke-linecap="round" />
<polyline points="545,215 560,220 575,212" fill="none" stroke="#f5cf7c" stroke-width="1.7" stroke-linejoin="round" stroke-linecap="round" />
<polyline points="590,320 605,335 600,355" fill="none" stroke="#f5cf7c" stroke-width="1.7" stroke-linejoin="round" stroke-linecap="round" />
<polyline points="470,270 490,280 505,275" fill="none" stroke="#f5cf7c" stroke-width="1.7" stroke-linejoin="round" stroke-linecap="round" />
<polyline points="355,7 337,25 320,35 305,55 296,70 290,90 280,110 268,135 262,150 245,172 238,190" fill="none" stroke="#fff" stroke-width="3.6" stroke-linejoin="round" stroke-linecap="round" opacity=".7"/>
<polyline points="345,5 370,15 395,25 410,50 424,62" fill="none" stroke="#fff" stroke-width="3.6" stroke-linejoin="round" stroke-linecap="round" opacity=".7"/>
<polyline points="20,8 45,5 60,8" fill="none" stroke="#fff" stroke-width="3.6" stroke-linejoin="round" stroke-linecap="round" opacity=".7"/>
<polyline points="245,185 235,195 220,225 200,238 170,250 150,270 135,300 115,320 105,340 100,372" fill="none" stroke="#fff" stroke-width="3.6" stroke-linejoin="round" stroke-linecap="round" opacity=".7"/>
<polyline points="200,237 230,250 255,265 280,272 315,275 325,285 345,292 375,297 395,305 424,310 460,300 500,295 540,290 565,280" fill="none" stroke="#fff" stroke-width="3.6" stroke-linejoin="round" stroke-linecap="round" opacity=".7"/>
<polyline points="424,62 445,90 455,110 470,130 500,160 530,185 555,215 565,250 570,275" fill="none" stroke="#fff" stroke-width="3.6" stroke-linejoin="round" stroke-linecap="round" opacity=".7"/>
<polyline points="470,130 455,150 440,175 430,200" fill="none" stroke="#fff" stroke-width="3.6" stroke-linejoin="round" stroke-linecap="round" opacity=".7"/>
<polyline points="455,110 490,115 520,110 560,118 600,125 640,128 670,140" fill="none" stroke="#fff" stroke-width="3.6" stroke-linejoin="round" stroke-linecap="round" opacity=".7"/>
<polyline points="570,275 600,255 630,230 650,200 665,170 675,150" fill="none" stroke="#fff" stroke-width="3.6" stroke-linejoin="round" stroke-linecap="round" opacity=".7"/>
<polyline points="570,275 590,300 610,330 625,360 630,372" fill="none" stroke="#fff" stroke-width="3.6" stroke-linejoin="round" stroke-linecap="round" opacity=".7"/>
<polyline points="630,372 628,371" fill="none" stroke="#fff" stroke-width="3.6" stroke-linejoin="round" stroke-linecap="round" opacity=".7"/>
<polyline points="675,150 700,120 725,100 760,80 800,60 830,45 860,30 900,20 940,12 968,8" fill="none" stroke="#fff" stroke-width="3.6" stroke-linejoin="round" stroke-linecap="round" opacity=".7"/>
<polyline points="968,5 970.5,15 965.5,50 963,75 968,100 978,125 988,150 998,172 1005,190 1010.5,185" fill="none" stroke="#fff" stroke-width="3.6" stroke-linejoin="round" stroke-linecap="round" opacity=".7"/>
<polyline points="965.5,50 953,55 948,62 935.5,85 923,105 910.5,140 898,175 890,190" fill="none" stroke="#fff" stroke-width="3.6" stroke-linejoin="round" stroke-linecap="round" opacity=".7"/>
<polyline points="1010.5,185 1023,200 1023,222.5 1030.5,252.5 1040.5,275" fill="none" stroke="#fff" stroke-width="3.6" stroke-linejoin="round" stroke-linecap="round" opacity=".7"/>
<polyline points="1128,5 1135.5,30 1138,60 1148,90 1155.5,120 1173,145 1198,165 1208,180 1205,190" fill="none" stroke="#fff" stroke-width="3.6" stroke-linejoin="round" stroke-linecap="round" opacity=".7"/>
<polyline points="1193,5 1223,30 1248,50 1271.5,75 1295,95 1321,107" fill="none" stroke="#fff" stroke-width="3.6" stroke-linejoin="round" stroke-linecap="round" opacity=".7"/>
<polyline points="1340,5 1320,20 1310,35 1300,55 1290,75 1283,95 1275,110" fill="none" stroke="#fff" stroke-width="3.6" stroke-linejoin="round" stroke-linecap="round" opacity=".7"/>
<polyline points="1223,185 1210,210 1195,235 1183,252.5" fill="none" stroke="#fff" stroke-width="3.6" stroke-linejoin="round" stroke-linecap="round" opacity=".7"/>
<polyline points="690,140 705,150 700,170 690,185" fill="none" stroke="#fff" stroke-width="3.6" stroke-linejoin="round" stroke-linecap="round" opacity=".7"/>
<polyline points="640,150 660,165 680,185 700,205 712,225" fill="none" stroke="#fff" stroke-width="3.6" stroke-linejoin="round" stroke-linecap="round" opacity=".7"/>
<polyline points="524,247.5 534,235 554,232.5 584,235 614,247.5 621.5,267.5 614,290 596.5,302.5 574,310 549,305 529,290 519,270 524,247.5" fill="none" stroke="#fff" stroke-width="3.6" stroke-linejoin="round" stroke-linecap="round" opacity=".7"/>
<polyline points="424,250 470,246 499,245 524,267" fill="none" stroke="#fff" stroke-width="3.6" stroke-linejoin="round" stroke-linecap="round" opacity=".7"/>
<polyline points="456,185 469,205 506,225 534,235" fill="none" stroke="#fff" stroke-width="3.6" stroke-linejoin="round" stroke-linecap="round" opacity=".7"/>
<polyline points="424,292 474,290 519,270" fill="none" stroke="#fff" stroke-width="3.6" stroke-linejoin="round" stroke-linecap="round" opacity=".7"/>
<polyline points="564,310 536,325 499,340 470,360 454,372" fill="none" stroke="#fff" stroke-width="3.6" stroke-linejoin="round" stroke-linecap="round" opacity=".7"/>
<polyline points="584,305 599,325 614,345 624,372" fill="none" stroke="#fff" stroke-width="3.6" stroke-linejoin="round" stroke-linecap="round" opacity=".7"/>
<polyline points="619,270 649,265 674,257 699,247 711,244" fill="none" stroke="#fff" stroke-width="3.6" stroke-linejoin="round" stroke-linecap="round" opacity=".7"/>
<polyline points="599,242 624,217 644,200 656,185 668,165" fill="none" stroke="#fff" stroke-width="3.6" stroke-linejoin="round" stroke-linecap="round" opacity=".7"/>
<polyline points="554,232 560,255 568,275" fill="none" stroke="#fff" stroke-width="3.6" stroke-linejoin="round" stroke-linecap="round" opacity=".7"/>
<polyline points="568,275 545,290 529,290" fill="none" stroke="#fff" stroke-width="3.6" stroke-linejoin="round" stroke-linecap="round" opacity=".7"/>
<polyline points="568,275 590,262 614,247" fill="none" stroke="#fff" stroke-width="3.6" stroke-linejoin="round" stroke-linecap="round" opacity=".7"/>
<polyline points="570,278 575,295 574,310" fill="none" stroke="#fff" stroke-width="3.6" stroke-linejoin="round" stroke-linecap="round" opacity=".7"/>
<polyline points="584,235 600,215 612,195 625,180" fill="none" stroke="#fff" stroke-width="3.6" stroke-linejoin="round" stroke-linecap="round" opacity=".7"/>
<polyline points="534,235 520,215 500,200 480,192" fill="none" stroke="#fff" stroke-width="3.6" stroke-linejoin="round" stroke-linecap="round" opacity=".7"/>
<polyline points="355,7 337,25 320,35 305,55 296,70 290,90 280,110 268,135 262,150 245,172 238,190" fill="none" stroke="#eda873" stroke-width="1.9" stroke-linejoin="round" stroke-linecap="round" />
<polyline points="345,5 370,15 395,25 410,50 424,62" fill="none" stroke="#eda873" stroke-width="1.9" stroke-linejoin="round" stroke-linecap="round" />
<polyline points="20,8 45,5 60,8" fill="none" stroke="#eda873" stroke-width="1.9" stroke-linejoin="round" stroke-linecap="round" />
<polyline points="245,185 235,195 220,225 200,238 170,250 150,270 135,300 115,320 105,340 100,372" fill="none" stroke="#eda873" stroke-width="1.9" stroke-linejoin="round" stroke-linecap="round" />
<polyline points="200,237 230,250 255,265 280,272 315,275 325,285 345,292 375,297 395,305 424,310 460,300 500,295 540,290 565,280" fill="none" stroke="#eda873" stroke-width="1.9" stroke-linejoin="round" stroke-linecap="round" />
<polyline points="424,62 445,90 455,110 470,130 500,160 530,185 555,215 565,250 570,275" fill="none" stroke="#eda873" stroke-width="1.9" stroke-linejoin="round" stroke-linecap="round" />
<polyline points="470,130 455,150 440,175 430,200" fill="none" stroke="#eda873" stroke-width="1.9" stroke-linejoin="round" stroke-linecap="round" />
<polyline points="455,110 490,115 520,110 560,118 600,125 640,128 670,140" fill="none" stroke="#eda873" stroke-width="1.9" stroke-linejoin="round" stroke-linecap="round" />
<polyline points="570,275 600,255 630,230 650,200 665,170 675,150" fill="none" stroke="#eda873" stroke-width="1.9" stroke-linejoin="round" stroke-linecap="round" />
<polyline points="570,275 590,300 610,330 625,360 630,372" fill="none" stroke="#eda873" stroke-width="1.9" stroke-linejoin="round" stroke-linecap="round" />
<polyline points="630,372 628,371" fill="none" stroke="#eda873" stroke-width="1.9" stroke-linejoin="round" stroke-linecap="round" />
<polyline points="675,150 700,120 725,100 760,80 800,60 830,45 860,30 900,20 940,12 968,8" fill="none" stroke="#eda873" stroke-width="1.9" stroke-linejoin="round" stroke-linecap="round" />
<polyline points="968,5 970.5,15 965.5,50 963,75 968,100 978,125 988,150 998,172 1005,190 1010.5,185" fill="none" stroke="#eda873" stroke-width="1.9" stroke-linejoin="round" stroke-linecap="round" />
<polyline points="965.5,50 953,55 948,62 935.5,85 923,105 910.5,140 898,175 890,190" fill="none" stroke="#eda873" stroke-width="1.9" stroke-linejoin="round" stroke-linecap="round" />
<polyline points="1010.5,185 1023,200 1023,222.5 1030.5,252.5 1040.5,275" fill="none" stroke="#eda873" stroke-width="1.9" stroke-linejoin="round" stroke-linecap="round" />
<polyline points="1128,5 1135.5,30 1138,60 1148,90 1155.5,120 1173,145 1198,165 1208,180 1205,190" fill="none" stroke="#eda873" stroke-width="1.9" stroke-linejoin="round" stroke-linecap="round" />
<polyline points="1193,5 1223,30 1248,50 1271.5,75 1295,95 1321,107" fill="none" stroke="#eda873" stroke-width="1.9" stroke-linejoin="round" stroke-linecap="round" />
<polyline points="1340,5 1320,20 1310,35 1300,55 1290,75 1283,95 1275,110" fill="none" stroke="#eda873" stroke-width="1.9" stroke-linejoin="round" stroke-linecap="round" />
<polyline points="1223,185 1210,210 1195,235 1183,252.5" fill="none" stroke="#eda873" stroke-width="1.9" stroke-linejoin="round" stroke-linecap="round" />
<polyline points="690,140 705,150 700,170 690,185" fill="none" stroke="#eda873" stroke-width="1.9" stroke-linejoin="round" stroke-linecap="round" />
<polyline points="640,150 660,165 680,185 700,205 712,225" fill="none" stroke="#eda873" stroke-width="1.9" stroke-linejoin="round" stroke-linecap="round" />
<polyline points="524,247.5 534,235 554,232.5 584,235 614,247.5 621.5,267.5 614,290 596.5,302.5 574,310 549,305 529,290 519,270 524,247.5" fill="none" stroke="#eda873" stroke-width="1.9" stroke-linejoin="round" stroke-linecap="round" />
<polyline points="424,250 470,246 499,245 524,267" fill="none" stroke="#eda873" stroke-width="1.9" stroke-linejoin="round" stroke-linecap="round" />
<polyline points="456,185 469,205 506,225 534,235" fill="none" stroke="#eda873" stroke-width="1.9" stroke-linejoin="round" stroke-linecap="round" />
<polyline points="424,292 474,290 519,270" fill="none" stroke="#eda873" stroke-width="1.9" stroke-linejoin="round" stroke-linecap="round" />
<polyline points="564,310 536,325 499,340 470,360 454,372" fill="none" stroke="#eda873" stroke-width="1.9" stroke-linejoin="round" stroke-linecap="round" />
<polyline points="584,305 599,325 614,345 624,372" fill="none" stroke="#eda873" stroke-width="1.9" stroke-linejoin="round" stroke-linecap="round" />
<polyline points="619,270 649,265 674,257 699,247 711,244" fill="none" stroke="#eda873" stroke-width="1.9" stroke-linejoin="round" stroke-linecap="round" />
<polyline points="599,242 624,217 644,200 656,185 668,165" fill="none" stroke="#eda873" stroke-width="1.9" stroke-linejoin="round" stroke-linecap="round" />
<polyline points="554,232 560,255 568,275" fill="none" stroke="#eda873" stroke-width="1.9" stroke-linejoin="round" stroke-linecap="round" />
<polyline points="568,275 545,290 529,290" fill="none" stroke="#eda873" stroke-width="1.9" stroke-linejoin="round" stroke-linecap="round" />
<polyline points="568,275 590,262 614,247" fill="none" stroke="#eda873" stroke-width="1.9" stroke-linejoin="round" stroke-linecap="round" />
<polyline points="570,278 575,295 574,310" fill="none" stroke="#eda873" stroke-width="1.9" stroke-linejoin="round" stroke-linecap="round" />
<polyline points="584,235 600,215 612,195 625,180" fill="none" stroke="#eda873" stroke-width="1.9" stroke-linejoin="round" stroke-linecap="round" />
<polyline points="534,235 520,215 500,200 480,192" fill="none" stroke="#eda873" stroke-width="1.9" stroke-linejoin="round" stroke-linecap="round" />
<polyline points="929,5 934,100 940.5,190 946,280 952,372" fill="none" stroke="#6b7080" stroke-width="1.1" stroke-linejoin="round" stroke-linecap="round" stroke-dasharray="5 2.5" opacity=".55"/>
<polyline points="192,70 240,105 290,145 340,185" fill="none" stroke="#6b7080" stroke-width="1.1" stroke-linejoin="round" stroke-linecap="round" stroke-dasharray="5 2.5" opacity=".55"/>
<polyline points="192,70 186,90 195,100 190,115 172,145 176,160 168,170 175,180 165,190 135,228 128,245 110,258 85,275 60,300 42,323 6,295" fill="none" stroke="#6b7080" stroke-width="1.1" stroke-linejoin="round" stroke-linecap="round" stroke-dasharray="5 2.5" opacity=".55"/>
<polyline points="570,240 535,275 555,290 585,300 605,275 570,240" fill="none" stroke="#6b7080" stroke-width="1" stroke-linejoin="round" stroke-linecap="round" stroke-dasharray="5 2.5" opacity=".55"/>
<polyline points="996,5 1000,40 998,72 1030,110 1060,150" fill="none" stroke="#6b7080" stroke-width="1" stroke-linejoin="round" stroke-linecap="round" stroke-dasharray="5 2.5" opacity=".55"/>
<polyline points="1375,5 1360,40 1345,70" fill="none" stroke="#c8d8e0" stroke-width="1" stroke-linejoin="round" stroke-linecap="round" opacity=".6"/>
<g><path d="M278.0 0.0 Q284.0 2.0 286.0 -2.0 Q291 1.5 296.0 -2.0 Q298.0 2.0 304.0 0.0 Q307.0 12.850000000000001 291 25.0 Q275.0 12.850000000000001 278.0 0.0 Z" fill="#3f55b5" stroke="#fff" stroke-width="1.2"/><path d="M278.0 0.0 Q284.0 2.0 286.0 -2.0 Q291 1.5 296.0 -2.0 Q298.0 2.0 304.0 0.0 L304.7 6.0 H277.3 Z" fill="#d8502f"/><text x="291" y="18.0" font-size="12.5" font-weight="bold" text-anchor="middle" fill="#fff">70</text></g>
<g><path d="M813.5 21.5 Q819.5 23.5 821.5 19.5 Q826.5 23.0 831.5 19.5 Q833.5 23.5 839.5 21.5 Q842.5 34.35 826.5 46.5 Q810.5 34.35 813.5 21.5 Z" fill="#3f55b5" stroke="#fff" stroke-width="1.2"/><path d="M813.5 21.5 Q819.5 23.5 821.5 19.5 Q826.5 23.0 831.5 19.5 Q833.5 23.5 839.5 21.5 L840.2 27.5 H812.8 Z" fill="#d8502f"/><text x="826.5" y="39.5" font-size="12.5" font-weight="bold" text-anchor="middle" fill="#fff">95</text></g>
<g><path d="M636.0 151.5 Q642.0 153.5 644.0 149.5 Q649 153.0 654.0 149.5 Q656.0 153.5 662.0 151.5 Q665.0 164.35 649 176.5 Q633.0 164.35 636.0 151.5 Z" fill="#3f55b5" stroke="#fff" stroke-width="1.2"/><path d="M636.0 151.5 Q642.0 153.5 644.0 149.5 Q649 153.0 654.0 149.5 Q656.0 153.5 662.0 151.5 L662.7 157.5 H635.3 Z" fill="#d8502f"/><text x="649" y="169.5" font-size="12.5" font-weight="bold" text-anchor="middle" fill="#fff">95</text></g>
<g><path d="M72.0 368.5 Q78.0 370.5 80.0 366.5 Q85 370.0 90.0 366.5 Q92.0 370.5 98.0 368.5 Q101.0 381.35 85 393.5 Q69.0 381.35 72.0 368.5 Z" fill="#3f55b5" stroke="#fff" stroke-width="1.2"/><path d="M72.0 368.5 Q78.0 370.5 80.0 366.5 Q85 370.0 90.0 366.5 Q92.0 370.5 98.0 368.5 L98.7 374.5 H71.3 Z" fill="#d8502f"/><text x="85" y="386.5" font-size="12.5" font-weight="bold" text-anchor="middle" fill="#fff">66</text></g>
<g><path d="M1239 133.5 Q1243 135.5 1246 132.5 Q1253 136 1260 132.5 Q1263 135.5 1267 133.5 Q1266 139 1268 145 Q1269 156 1253 161 Q1237 156 1238 145 Q1240 139 1239 133.500 Z" fill="#fff" stroke="#222" stroke-width="1.3"/><text x="1253" y="152" font-size="12" font-weight="bold" text-anchor="middle" fill="#222">9</text></g>
<text x="37" y="103" font-size="20" textLength="75" lengthAdjust="spacing" fill="#3d3d3f" stroke="#fff" stroke-opacity=".75" stroke-width="2.6" paint-order="stroke" stroke-linejoin="round">Romney</text>
<text x="199" y="163" font-size="20" textLength="92" lengthAdjust="spacing" fill="#3d3d3f" stroke="#fff" stroke-opacity=".75" stroke-width="2.6" paint-order="stroke" stroke-linejoin="round">Winchester</text>
<text x="379" y="188" font-size="20" textLength="76" lengthAdjust="spacing" fill="#3d3d3f" stroke="#fff" stroke-opacity=".75" stroke-width="2.6" paint-order="stroke" stroke-linejoin="round">Leesburg</text>
<text x="420" y="78" font-size="20" textLength="85" lengthAdjust="spacing" fill="#3d3d3f" stroke="#fff" stroke-opacity=".75" stroke-width="2.6" paint-order="stroke" stroke-linejoin="round">Frederick</text>
<text x="638.5" y="121" font-size="24" textLength="108" lengthAdjust="spacing" fill="#3d3d3f" stroke="#fff" stroke-opacity=".75" stroke-width="2.6" paint-order="stroke" stroke-linejoin="round">Baltimore</text>
<text x="514" y="230.5" font-size="20" textLength="115.5" lengthAdjust="spacing" fill="#3d3d3f" stroke="#fff" stroke-opacity=".75" stroke-width="2.6" paint-order="stroke" stroke-linejoin="round">Silver Spring</text>
<text x="506" y="305" font-size="25" textLength="127.5" lengthAdjust="spacing" fill="#3d3d3f" stroke="#fff" stroke-opacity=".75" stroke-width="2.6" paint-order="stroke" stroke-linejoin="round">Washington</text>
<text x="680" y="235" font-size="21" textLength="92.7" lengthAdjust="spacing" fill="#3d3d3f" stroke="#fff" stroke-opacity=".75" stroke-width="2.6" paint-order="stroke" stroke-linejoin="round">Annapolis</text>
<text x="370" y="316" font-size="20" textLength="89" lengthAdjust="spacing" fill="#3d3d3f" stroke="#fff" stroke-opacity=".75" stroke-width="2.6" paint-order="stroke" stroke-linejoin="round">Linton Hall</text>
<text x="445" y="356" font-size="20" textLength="77.7" lengthAdjust="spacing" fill="#3d3d3f" stroke="#fff" stroke-opacity=".75" stroke-width="2.6" paint-order="stroke" stroke-linejoin="round">Dale City</text>
<text x="571" y="361" font-size="21" textLength="70" lengthAdjust="spacing" fill="#3d3d3f" stroke="#fff" stroke-opacity=".75" stroke-width="2.6" paint-order="stroke" stroke-linejoin="round">Waldorf</text>
<text x="978.5" y="170.7" font-size="21" textLength="52.5" lengthAdjust="spacing" fill="#3d3d3f" stroke="#fff" stroke-opacity=".75" stroke-width="2.6" paint-order="stroke" stroke-linejoin="round">Dover</text>
<text x="1109" y="52.5" font-size="20" textLength="76.5" lengthAdjust="spacing" fill="#3d3d3f" stroke="#fff" stroke-opacity=".75" stroke-width="2.6" paint-order="stroke" stroke-linejoin="round">Vineland</text>
<text x="1326.3" y="126.5" font-size="20" textLength="105.1" lengthAdjust="spacing" fill="#3d3d3f" stroke="#fff" stroke-opacity=".75" stroke-width="2.6" paint-order="stroke" stroke-linejoin="round">Atlantic City</text>
<text x="1090" y="310" font-size="19" textLength="50.5" lengthAdjust="spacing" fill="#3d3d3f" stroke="#fff" stroke-opacity=".75" stroke-width="2.6" paint-order="stroke" stroke-linejoin="round">Lewes</text>
<text x="996" y="341" font-size="20" textLength="96.5" lengthAdjust="spacing" fill="#3d3d3f" stroke="#fff" stroke-opacity=".75" stroke-width="2.6" paint-order="stroke" stroke-linejoin="round">Georgetown</text>
<text x="785" y="386" font-size="20" textLength="75" lengthAdjust="spacing" fill="#3d3d3f" stroke="#fff" stroke-opacity=".75" stroke-width="2.6" paint-order="stroke" stroke-linejoin="round">Cambridge</text>
<text x="551.5" y="72" font-size="17.5" textLength="138.5" lengthAdjust="spacing" font-weight="bold" fill="#15161a" stroke="#fff" stroke-opacity=".75" stroke-width="2.6" paint-order="stroke" stroke-linejoin="round">MARYLAND</text>
<text x="951.7" y="245.7" font-size="18" textLength="117.3" lengthAdjust="spacing" font-weight="bold" fill="#15161a" stroke="#fff" stroke-opacity=".75" stroke-width="2.6" paint-order="stroke" stroke-linejoin="round">DELAWARE</text>
<circle cx="75" cy="115" r="2.6" fill="#1c1c1c" stroke="#fff" stroke-opacity=".6" stroke-width="1"/>
<circle cx="245" cy="171" r="2.6" fill="#1c1c1c" stroke="#fff" stroke-opacity=".6" stroke-width="1"/>
<circle cx="417" cy="197" r="2.6" fill="#1c1c1c" stroke="#fff" stroke-opacity=".6" stroke-width="1"/>
<circle cx="414" cy="324" r="2.6" fill="#1c1c1c" stroke="#fff" stroke-opacity=".6" stroke-width="1"/>
<circle cx="572" cy="240" r="2.6" fill="#1c1c1c" stroke="#fff" stroke-opacity=".6" stroke-width="1"/>
<circle cx="483" cy="365.7" r="2.6" fill="#1c1c1c" stroke="#fff" stroke-opacity=".6" stroke-width="1"/>
<circle cx="725" cy="246" r="2.6" fill="#1c1c1c" stroke="#fff" stroke-opacity=".6" stroke-width="1"/>
<circle cx="1004.7" cy="181" r="2.6" fill="#1c1c1c" stroke="#fff" stroke-opacity=".6" stroke-width="1"/>
<circle cx="1147.5" cy="63" r="2.6" fill="#1c1c1c" stroke="#fff" stroke-opacity=".6" stroke-width="1"/>
<circle cx="1321" cy="107" r="2.6" fill="#1c1c1c" stroke="#fff" stroke-opacity=".6" stroke-width="1"/>
<circle cx="1115.5" cy="320" r="2.6" fill="#1c1c1c" stroke="#fff" stroke-opacity=".6" stroke-width="1"/>
<circle cx="1044" cy="350" r="2.6" fill="#1c1c1c" stroke="#fff" stroke-opacity=".6" stroke-width="1"/>
<circle cx="372.5" cy="5.5" r="2.6" fill="#1c1c1c" stroke="#fff" stroke-opacity=".6" stroke-width="1"/>
<circle cx="569.5" cy="276.7" r="4.6" fill="#fff" stroke="#1c1c1c" stroke-width="1.4"/><circle cx="569.5" cy="276.7" r="2.2" fill="#1c1c1c"/>
<rect x="21.8" y="20.3" width="52.4" height="98.2" rx="6" fill="rgba(0,0,0,0.24)"/><rect x="24.3" y="22.8" width="47.4" height="93.2" rx="4" fill="#fff"/>
<rect x="24" y="68.6" width="48" height="1.2" fill="#c4c4c4"/>
<path d="M39.5 50.1 H59 M49.25 40.5 V59.7" stroke="#000" stroke-width="3.8" fill="none"/>
<path d="M39.4 96.600 H58.9" stroke="#000" stroke-width="4" fill="none"/>
<rect x="21.8" y="133.8" width="52.4" height="51.2" rx="6" fill="rgba(0,0,0,0.24)"/><rect x="24.3" y="136.3" width="47.4" height="46.2" rx="4" fill="#fff"/>
<rect x="21.8" y="184.2" width="52.4" height="51" rx="6" fill="rgba(0,0,0,0.24)"/><rect x="24.3" y="186.7" width="47.4" height="46.0" rx="4" fill="#fff"/>
<polygon points="47.900,149 58.100,154.100 57,165.100 44.400,167.900 38.800,157.800" fill="#464646"/>
<rect x="40.200" y="201.100" width="16.100" height="15.600" fill="#464646"/>
<rect x="1596" y="20" width="75" height="73.6" rx="6.5" fill="rgba(0,0,0,0.24)"/><rect x="1598.6" y="22.6" width="69.8" height="68.39999999999999" rx="4.5" fill="#fff"/>
<polygon points="1633.500,51.39999999999999 1654.100,64.1 1633.500,76.8 1612.900,64.1" fill="#c9cbcb" stroke="#8e9296" stroke-width=".9" stroke-linejoin="round"/>
<polygon points="1633.500,45.099999999999994 1654.100,57.8 1633.500,70.5 1612.900,57.8" fill="#d5d7d7" stroke="#8e9296" stroke-width=".9" stroke-linejoin="round"/>
<polygon points="1633.500,38.900000000000006 1654.100,51.6 1633.500,64.3 1612.900,51.6" fill="#e9eaea" stroke="#8e9296" stroke-width=".9" stroke-linejoin="round"/>
<rect x="1438.4" y="346.4" width="246" height="26" fill="#fff" opacity=".8"/>
<rect x="1447" y="352.400" width="18" height="6.300" fill="#4c7be1"/><rect x="1447" y="358.700" width="18" height="6.300" fill="#ffd500"/>
<text x="1471.3" y="365.300" font-size="18.500" fill="#0078a8" textLength="55.300" lengthAdjust="spacing">Leaflet</text>
<text x="1531.500" y="364.500" font-size="18.500" fill="#333">|</text>
<text x="1542.800" y="365.300" font-size="19" fill="#333" textLength="135.200" lengthAdjust="spacing">MapBox Streets</text>
</svg>
<!--MAP_END-->
</div>

<!-- STATUS BAR -->
<div id="bar" class="abs">
  <div class="msg">10 routes have changed after they were sent.</div>
  <div class="r" style="top:11px"><span class="dot"></span>Routes: sent at 12:58 on Mon, June 17</div>
  <div class="r" style="top:35px"><span class="dot"></span>Customer notifications: not sent <a>Send</a></div>
</div>

<!-- TOOLBAR -->
<div id="tool" class="abs">
  <div class="inp" style="left:39px;width:184px">13.06.2024<i style="left:157px"></i>
    <svg width="26" height="31" viewBox="0 0 26 31" style="left:158px"><rect x="4.6" y="7.6" width="16" height="16" rx="1.6" fill="none" stroke="#020c22" stroke-width="2"/><rect x="4.6" y="7.6" width="16" height="5" fill="#020c22"/><rect x="7.3" y="5" width="2.2" height="4" fill="#020c22"/><rect x="15.6" y="5" width="2.2" height="4" fill="#020c22"/><rect x="13.2" y="16.2" width="4.6" height="4.6" fill="#020c22"/></svg>
  </div>
  <div class="inp" style="left:231.5px;width:123px">Day<i style="left:95px"></i>
    <svg width="26" height="31" viewBox="0 0 26 31" style="left:96px"><path d="M7.5 12.5 L13 18 L18.5 12.5" fill="none" stroke="#020c22" stroke-width="2.3"/></svg>
  </div>
  <div class="bbtn" style="left:361px;width:186px;padding-left:45.5px">Import Orders
    <svg width="24" height="28" viewBox="0 0 24 28" style="left:14px;top:13px"><path d="M4 2.2 H14.5 L20.5 8.2 V23 Q20.5 24.8 18.7 24.8 H4 Q2.2 24.8 2.2 23 V4 Q2.2 2.2 4 2.2 Z" fill="none" stroke="#fff" stroke-width="2" stroke-linejoin="round"/><path d="M11.3 9.2 L16 14.4 H13 V18.6 H9.6 V14.4 H6.6 Z" fill="#fff"/></svg>
  </div>
  <div class="bbtn" style="left:553.5px;width:171px;padding-left:46px;font-size:18.75px">Plan Routes
    <svg width="26" height="28" viewBox="0 0 26 28" style="left:13px;top:13px"><rect x="2.6" y="4.6" width="19.6" height="19.6" rx="2.4" fill="none" stroke="#fff" stroke-width="2"/><rect x="6.4" y="1.6" width="2.2" height="5" fill="#fff"/><rect x="16.2" y="1.6" width="2.2" height="5" fill="#fff"/><rect x="6.2" y="8.6" width="12.4" height="2.6" fill="#fff"/><g fill="#fff"><rect x="6.2" y="13.4" width="3" height="2.6"/><rect x="10.9" y="13.4" width="3" height="2.6"/><rect x="15.6" y="13.4" width="3" height="2.6"/><rect x="6.2" y="17.8" width="3" height="2.6"/><rect x="10.9" y="17.8" width="3" height="2.6"/><rect x="15.6" y="17.8" width="3" height="2.6"/></g></svg>
  </div>
  <div class="bbtn" style="left:730px;width:198px;padding-left:46.5px;font-size:18.7px">Share Routes
    <svg width="28" height="24" viewBox="0 0 28 24" style="left:12px;top:13px"><path d="M15.5 3.2 L24.5 11 L15.5 18.8 V14.4 C9.5 14.2 5.8 16 3 20.6 C3.4 13.4 7.6 8.4 15.5 7.8 Z" fill="none" stroke="#fff" stroke-width="2" stroke-linejoin="round"/></svg>
    <svg width="14" height="10" viewBox="0 0 14 10" style="left:168px;top:20px"><path d="M1 1.5 H13 L7 8 Z" fill="#fff"/></svg>
  </div>
  <div class="ibtn" style="left:1230px"></div><div class="ibtn on" style="left:1287px"></div><div class="ibtn on" style="left:1343.5px"></div><div class="ibtn on" style="left:1400.5px"></div><div class="ibtn on" style="left:1457.5px"></div><div class="ibtn" style="left:1514.5px"></div><div class="ibtn on" style="left:1571px"></div><div class="ibtn" style="left:1628px"></div>
</div>
<svg class="abs" style="left:1230px;top:446px" width="460" height="61" viewBox="1230 446 460 61">
 <g fill="#020c22" stroke="none">
  <!-- refresh -->
  <path d="M1273.1 478.6 A11.3 11.3 0 1 1 1268.9 468.1" fill="none" stroke="#020c22" stroke-width="2.5"/>
  <path d="M1271.2 464.2 L1275.4 473.6 L1265.6 473 Z"/>
  <!-- lock -->
  <rect x="1305.4" y="472.2" width="25.8" height="17.8" rx="2"/>
  <path d="M1312.6 474 V469.8 A5.7 5.7 0 0 1 1324 469.8 V474" fill="none" stroke="#020c22" stroke-width="2.6"/>
  <circle cx="1318.3" cy="481.2" r="3" fill="#cbd2da"/>
  <!-- comment star -->
  <path d="M1364.6 462.7 H1386 Q1387.6 462.7 1387.6 464.3 V482.2 Q1387.6 483.8 1386 483.8 H1380 L1375.3 490 L1370.6 483.8 H1364.6 Q1363 483.8 1363 482.2 V464.3 Q1363 462.7 1364.6 462.7 Z"/>
  <path d="M1375.4 467.8 L1377 471.4 L1380.9 471.8 L1378 474.4 L1378.8 478.2 L1375.4 476.3 L1372 478.2 L1372.8 474.4 L1369.9 471.8 L1373.8 471.4 Z" fill="#cbd2da"/>
  <!-- pin -->
  <path d="M1432.4 463.3 C1438.4 463.3 1443 467.8 1443 473.6 C1443 480.4 1436.4 486.4 1432.4 491.3 C1428.4 486.4 1421.8 480.4 1421.8 473.6 C1421.8 467.8 1426.4 463.3 1432.4 463.3 Z"/>
  <circle cx="1432.4" cy="473.4" r="3.6" fill="#cbd2da"/>
  <!-- route -->
  <path d="M1498.5 459.8 C1502.6 459.8 1505.7 462.9 1505.7 466.9 C1505.7 471.2 1501 475 1498.5 478.6 C1496 475 1491.3 471.2 1491.3 466.9 C1491.3 462.9 1494.4 459.8 1498.500 459.8 Z"/>
  <circle cx="1498.5" cy="466.7" r="2.6" fill="#cbd2da"/>
  <path d="M1480.4 474 C1484.6 474 1487.8 477.2 1487.8 481.3 C1487.8 485.8 1483 489.6 1480.4 493.4 C1477.800 489.6 1473 485.8 1473 481.3 C1473 477.2 1476.2 474 1480.4 474 Z"/>
  <circle cx="1480.4" cy="481.100" r="2.6" fill="#cbd2da"/>
  <path d="M1481 492.200 H1489 C1496 492.200 1493.500 486 1494 482 C1494.400 479 1496.500 478 1498.500 477.5" fill="none" stroke="#020c22" stroke-width="2.4"/>
  <!-- branches -->
  <g><path d="M1533.9 472.4 C1531.7 469.0 1528.7 466.4 1528.7 463.2 A5.2 5.2 0 0 1 1539.1000000000001 463.2 C1539.1000000000001 466.4 1536.1000000000001 469.0 1533.9 472.4 Z"/><circle cx="1533.9" cy="463.2" r="2" fill="#fff"/><path d="M1558.4 479.8 C1556.2 476.40000000000003 1553.2 473.8 1553.2 470.6 A5.2 5.2 0 0 1 1563.6000000000001 470.6 C1563.6000000000001 473.8 1560.6000000000001 476.40000000000003 1558.4 479.8 Z"/><circle cx="1558.4" cy="470.6" r="2" fill="#fff"/><path d="M1534.9 495.2 C1532.7 491.8 1529.7 489.2 1529.7 486 A5.2 5.2 0 0 1 1540.1000000000001 486 C1540.1000000000001 489.2 1537.1000000000001 491.8 1534.9 495.2 Z"/><circle cx="1534.9" cy="486" r="2" fill="#fff"/><path d="M1534 471.4 L1558 478.6 L1535.2 494.2" fill="none" stroke="#020c22" stroke-width="2.4" stroke-linejoin="round"/></g>
  <!-- globe -->
  <circle cx="1602.5" cy="476.2" r="14.5" fill="none" stroke="#020c22" stroke-width="2.7"/>
  <polygon points="1587.6,476.5 1588.6,471.1 1592.0,466.3 1596.7,463.3 1602.2,461.9 1606.9,462.6 1611.7,465.0 1608.9,466.7 1606.9,465.3 1604.9,467.0 1602.2,468.4 1599.4,467.3 1596.7,468.4 1598.1,470.7 1595.4,472.1 1593.0,474.1 1595.4,475.8 1592.3,476.9 1589.6,475.2"/>
  <polygon points="1613.0,467.0 1616.4,471.1 1618.3,476.5 1617.1,481.9 1614.4,486.4 1612.0,483.3 1612.3,479.9 1610.3,477.9 1607.6,477.2 1606.6,474.8 1608.3,472.4 1611.0,473.1 1613.0,471.8 1610.3,470.4 1608.9,468.4"/>
  <polygon points="1595.4,477.9 1598.1,477.2 1600.8,478.9 1603.5,480.6 1602.8,483.3 1600.8,485.0 1599.6,488.4 1597.4,487.7 1596.7,484.0 1595.0,481.3"/>
  <!-- sidebar -->
  <rect x="1647.2" y="464.2" width="24.9" height="24.6" rx="2.6" fill="none" stroke="#020c22" stroke-width="2.6"/>
  <path d="M1646 466 Q1646 463 1649 463 H1655.8 V490 H1649 Q1646 490 1646 487 Z"/>
 </g>
</svg>

<!-- TABS -->
<div id="tabs" class="abs">
  <div class="tab" style="left:7.8px;width:253.8px">Orders</div>
  <div class="tab" style="left:264.2px">Routes</div>
  <div class="tab" style="left:519.8px">Timeline</div>
  <div class="tab act" style="left:775.5px"><svg width="19" height="17" viewBox="0 0 19 17"><path d="M9.5 0.8 L18.4 16.2 H0.6 Z" fill="#f6cd45" stroke="#f6cd45" stroke-width="1" stroke-linejoin="round"/><rect x="8.6" y="5" width="1.8" height="6.4" fill="#1a1205"/><rect x="8.6" y="12.6" width="1.8" height="1.9" fill="#3a1205"/></svg>Not Scheduled</div>
</div>

<!-- PANEL -->
<div id="panel" class="abs">
  <div class="grp">Group by</div>
  <div class="seg"><span class="on">Order</span><span>Driver</span></div>
  <div class="replan"><a>Replan</a> after making changes</div>
  <div class="search">Search by order or driver...<i></i><svg width="26" height="33" viewBox="0 0 26 33"><circle cx="14.5" cy="14.5" r="7" fill="none" stroke="#111" stroke-width="1.8"/><path d="M9.8 20 L3.5 26.5" stroke="#111" stroke-width="2.2" stroke-linecap="round"/></svg></div>
  <div class="reload">Reload</div>
  <div class="row hd" style="top:47px;height:43px;line-height:43px"><div class="c1">Driver</div><div class="c2">Reason Not Scheduled</div></div>
  <div class="row g" style="top:90px;height:52px;line-height:52px"><div class="c1"><span class="exp"><svg width="20" height="20" viewBox="0 0 20 20"><path d="M5 7.5 L10 12.5 L15 7.5" fill="none" stroke="#111" stroke-width="2"/></svg></span><b class="o">Order</b> <a class="lk">Eastern Shore Brewing</a></div><div class="c2">Driver is busy or at capacity</div></div>
  <div class="row g" style="top:142px;height:52px;line-height:52px"><div class="c1"><span class="exp"><svg width="20" height="20" viewBox="0 0 20 20"><path d="M5 12 L10 7 L15 12" fill="none" stroke="#111" stroke-width="2"/></svg></span><b class="o">Order</b> <a class="lk">Bordeleau Vineyards &amp; Winery</a></div></div>
  <div class="row" style="top:194px;height:40px;line-height:40px"><div class="c1">Alvin Rube - MD111882</div><div class="c2">Working hours not long enough to serve location</div></div>
  <div class="row" style="top:234px;height:40px;line-height:40px;background:#f1f2f4"><div class="c1">Desmond Vladimir - MD880123</div><div class="c2">Driver is busy or at capacity</div></div>
  <div class="row" style="top:274px;height:39px;line-height:39px"><div class="c1">Clara Merrill - MD782043</div><div class="c2">Working hours not long enough to serve location</div></div>
  <div class="row" style="top:313px;height:40px;line-height:40px;background:#fafafa"><div class="c1">George Cooper - MD891031</div><div class="c2">Driver is busy or at capacity</div></div>
  <div class="row" style="top:353px;height:40px;line-height:40px"><div class="c1">Sara Berard</div><div class="c2">Driver is busy or at capacity</div></div>
  <div class="row" style="top:392px;height:41px;line-height:42px;background:#fafafa"><div class="c1">Jordan Shaye</div><div class="c2">Driver is busy or at capacity</div></div>
  <div class="row" style="top:432px;height:41px;line-height:42px"><div class="c1">Kerry Percy</div><div class="c2">Driver is busy or at capacity</div></div>
  <div class="row" style="top:472.5px;height:10px;background:#e9ebee;border-top:1.5px solid #d9dce1"></div>
</div>

<div id="callout" class="abs">When a driver cannot take any more orders due<br>to capacity limits the orders will appear in the<br><span>“Not Scheduled” tab as “Driver is busy or at capacity”</span></div>

<!--MK_START-->
<svg id="mk" class="abs" style="left:6px;top:5px;z-index:25;overflow:hidden" width="1678" height="366" viewBox="6 5 1678 366" font-family="Liberation Sans, Arial, sans-serif" font-weight="bold" text-anchor="middle">
<polyline points="465,92 480,93 500,100 520,105 533,108" fill="none" stroke="rgb(132,148,88)" stroke-width="4.5" stroke-linejoin="round" stroke-linecap="round" />
<polyline points="533,108 560,115 590,125 620,130 640,128 655,135 666,141 690,140 703,141 710,136" fill="none" stroke="rgb(84,140,142)" stroke-width="4.5" stroke-linejoin="round" stroke-linecap="round" />
<polyline points="525,84 529,92 526,98 533,108" fill="none" stroke="rgb(84,140,142)" stroke-width="4" stroke-linejoin="round" stroke-linecap="round" />
<polyline points="587,87 591,100 593,115 595,125" fill="none" stroke="rgb(132,148,88)" stroke-width="4" stroke-linejoin="round" stroke-linecap="round" />
<polyline points="480,72 500,66 515,64" fill="none" stroke="rgb(132,148,88)" stroke-width="4" stroke-linejoin="round" stroke-linecap="round" />
<polyline points="530,68 545,70 560,72 575,80 587,87" fill="none" stroke="rgb(84,140,142)" stroke-width="3.5" stroke-linejoin="round" stroke-linecap="round" />
<polyline points="587,87 600,75 606,52" fill="none" stroke="rgb(84,140,142)" stroke-width="3.5" stroke-linejoin="round" stroke-linecap="round" />
<polyline points="606,50 625,72 640,85 652,100 660,112" fill="none" stroke="rgb(84,140,142)" stroke-width="3.5" stroke-linejoin="round" stroke-linecap="round" />
<polyline points="640,120 652,126 662,124 672,128" fill="none" stroke="rgb(160,92,146)" stroke-width="4" stroke-linejoin="round" stroke-linecap="round" />
<polyline points="666,141 675,136 690,134 700,138 705,142 700,146 690,143" fill="none" stroke="rgb(132,148,88)" stroke-width="3.5" stroke-linejoin="round" stroke-linecap="round" />
<polyline points="690,176 700,193 712,207 728,222 746,230.5 755.5,241 777,246 806,251 821,246 835.5,248.5 850,257 874,264 898.6,268 915.6,279 920.4,290 948,308.7 963,315 980.5,330 984,336 984,372" fill="none" stroke="rgb(158,110,95)" stroke-width="5" stroke-linejoin="round" stroke-linecap="round" />
<polyline points="700,193 712,207 728,222 746,230.5 755.5,241 777,246 806,251 821,246 835.5,248.5 848,255" fill="none" stroke="rgb(88,70,180)" stroke-width="1.6" stroke-linejoin="round" stroke-linecap="round" opacity=".7" transform="translate(0,-2.5)"/>
<polyline points="684,215 689,222.5 699,238.7 711.5,243.7 725,245" fill="none" stroke="rgb(166,100,78)" stroke-width="4" stroke-linejoin="round" stroke-linecap="round" />
<polyline points="711.5,244 704,265 695,280 690,290" fill="none" stroke="rgb(166,100,78)" stroke-width="4" stroke-linejoin="round" stroke-linecap="round" />
<polyline points="660,185 668,200 680,212 690,222" fill="none" stroke="rgb(166,100,78)" stroke-width="3" stroke-linejoin="round" stroke-linecap="round" opacity=".8"/>
<polyline points="657.7,279.5 657.7,302.5 649,310 636.5,325 624,340 614,360 610,372" fill="none" stroke="rgb(92,104,124)" stroke-width="4.2" stroke-linejoin="round" stroke-linecap="round" />
<polyline points="657.7,302.5 664,306 674,310 676.5,335 684,347.5 686,372" fill="none" stroke="rgb(92,104,124)" stroke-width="4.2" stroke-linejoin="round" stroke-linecap="round" />
<polyline points="672,215 676,225 672,236 664,240" fill="none" stroke="rgb(92,104,124)" stroke-width="4" stroke-linejoin="round" stroke-linecap="round" />
<polyline points="850.6,254 850.6,332" fill="none" stroke="rgb(88,70,180)" stroke-width="4" stroke-linejoin="round" stroke-linecap="round" />
<path d="M580 26 C575.5 11 561.5 -1.5 561.5 -16.5 A18.5 18.5 0 1 1 598.5 -16.5 C598.5 -1.5 584.5 11 580 26 Z" fill="rgb(70,132,146)" stroke="rgb(54,104,118)" stroke-width="1.6"/><text x="580" y="4.6" font-size="13.3" fill="rgb(200,201,205)" stroke="rgb(200,201,205)" stroke-width=".25">Th</text>
<path d="M515 64 C510.5 49 496.5 36.5 496.5 21.5 A18.5 18.5 0 1 1 533.5 21.5 C533.5 36.5 519.5 49 515 64 Z" fill="rgb(70,132,146)" stroke="rgb(54,104,118)" stroke-width="1.6"/><text x="515" y="26.6" font-size="20.3" fill="rgb(200,201,205)" stroke="rgb(200,201,205)" stroke-width=".35">7</text><text x="515" y="42.6" font-size="13.3" fill="rgb(200,201,205)" stroke="rgb(200,201,205)" stroke-width=".25">Th</text><circle cx="530" cy="11" r="10.2" fill="rgb(137,36,121)"/><rect x="524.4" y="9.7" width="3.9" height="2.800" fill="rgb(196,196,204)"/><rect x="530.8" y="9.7" width="3.900" height="2.800" fill="rgb(196,196,204)"/>
<path d="M465.5 77 C461 62 447 49.5 447 34.5 A18.5 18.5 0 1 1 484 34.5 C484 49.5 470 62 465.5 77 Z" fill="rgb(108,126,54)" stroke="rgb(86,101,45)" stroke-width="1.6"/><text x="465.5" y="39.6" font-size="20.3" fill="rgb(200,201,205)" stroke="rgb(200,201,205)" stroke-width=".35">9</text><text x="465.5" y="55.6" font-size="13.3" fill="rgb(200,201,205)" stroke="rgb(200,201,205)" stroke-width=".25">Th</text><circle cx="482" cy="18" r="10.2" fill="rgb(137,36,121)"/><rect x="476.4" y="16.7" width="3.9" height="2.800" fill="rgb(196,196,204)"/><rect x="482.8" y="16.7" width="3.900" height="2.800" fill="rgb(196,196,204)"/>
<path d="M525.7 84 C521.2 69 507.2 56.5 507.2 41.5 A18.5 18.5 0 1 1 544.2 41.5 C544.2 56.5 530.2 69 525.7 84 Z" fill="rgb(70,132,146)" stroke="rgb(54,104,118)" stroke-width="1.6"/><text x="525.7" y="46.6" font-size="20.3" fill="rgb(200,201,205)" stroke="rgb(200,201,205)" stroke-width=".35">4</text><text x="525.7" y="62.6" font-size="13.3" fill="rgb(200,201,205)" stroke="rgb(200,201,205)" stroke-width=".25">Th</text><circle cx="541.5" cy="24.5" r="10.2" fill="rgb(137,36,121)"/><rect x="535.9" y="23.2" width="3.9" height="2.800" fill="rgb(196,196,204)"/><rect x="542.3" y="23.2" width="3.900" height="2.800" fill="rgb(196,196,204)"/>
<path d="M587 87 C582.5 72 568.5 59.5 568.5 44.5 A18.5 18.5 0 1 1 605.5 44.5 C605.5 59.5 591.5 72 587 87 Z" fill="rgb(108,126,54)" stroke="rgb(86,101,45)" stroke-width="1.6"/><text x="587" y="49.6" font-size="20.3" fill="rgb(200,201,205)" stroke="rgb(200,201,205)" stroke-width=".35">2</text><text x="587" y="65.6" font-size="13.3" fill="rgb(200,201,205)" stroke="rgb(200,201,205)" stroke-width=".25">Th</text><circle cx="602.7" cy="27" r="10.2" fill="rgb(137,36,121)"/><rect x="597.1" y="25.7" width="3.9" height="2.800" fill="rgb(196,196,204)"/><rect x="603.5" y="25.7" width="3.900" height="2.800" fill="rgb(196,196,204)"/>
<path d="M681 116 C676.5 101 662.5 88.5 662.5 73.5 A18.5 18.5 0 1 1 699.5 73.5 C699.5 88.5 685.5 101 681 116 Z" fill="rgb(146,74,142)" stroke="rgb(114,54,114)" stroke-width="1.6"/><text x="681" y="94.6" font-size="13.3" fill="rgb(200,201,205)" stroke="rgb(200,201,205)" stroke-width=".25">Th</text><circle cx="699.3" cy="57" r="10.2" fill="rgb(137,36,121)"/><rect x="693.7" y="55.7" width="3.9" height="2.800" fill="rgb(196,196,204)"/><rect x="700.1" y="55.7" width="3.900" height="2.800" fill="rgb(196,196,204)"/>
<path d="M653 116.4 C648.5 101.4 634.5 88.9 634.5 73.9 A18.5 18.5 0 1 1 671.5 73.9 C671.5 88.9 657.5 101.4 653 116.4 Z" fill="rgb(146,74,142)" stroke="rgb(114,54,114)" stroke-width="1.6"/><text x="653" y="79" font-size="20.3" fill="rgb(200,201,205)" stroke="rgb(200,201,205)" stroke-width=".35">2</text><text x="653" y="95" font-size="13.3" fill="rgb(200,201,205)" stroke="rgb(200,201,205)" stroke-width=".25">Th</text><circle cx="668.5" cy="57.7" r="10.2" fill="rgb(137,36,121)"/><rect x="662.9" y="56.4" width="3.9" height="2.800" fill="rgb(196,196,204)"/><rect x="669.3" y="56.4" width="3.900" height="2.800" fill="rgb(196,196,204)"/>
<path d="M686 124 C681.5 109 667.5 96.5 667.5 81.5 A18.5 18.5 0 1 1 704.5 81.5 C704.5 96.5 690.5 109 686 124 Z" fill="rgb(70,132,146)" stroke="rgb(54,104,118)" stroke-width="1.6"/><text x="686" y="102.6" font-size="13.3" fill="rgb(200,201,205)" stroke="rgb(200,201,205)" stroke-width=".25">Th</text><circle cx="706.3" cy="68.5" r="10.2" fill="rgb(137,36,121)"/><rect x="700.7" y="67.2" width="3.9" height="2.800" fill="rgb(196,196,204)"/><rect x="707.1" y="67.2" width="3.900" height="2.800" fill="rgb(196,196,204)"/>
<path d="M689 128 C684.5 113 670.5 100.5 670.5 85.5 A18.5 18.5 0 1 1 707.5 85.5 C707.5 100.5 693.5 113 689 128 Z" fill="rgb(108,126,54)" stroke="rgb(86,101,45)" stroke-width="1.6"/><text x="689" y="106.6" font-size="13.3" fill="rgb(200,201,205)" stroke="rgb(200,201,205)" stroke-width=".25">Th</text>
<path d="M691 134 C686.5 119 672.5 106.5 672.5 91.5 A18.5 18.5 0 1 1 709.5 91.5 C709.5 106.5 695.5 119 691 134 Z" fill="rgb(48,120,40)" stroke="rgb(37,95,33)" stroke-width="1.6"/><text x="691" y="112.6" font-size="13.3" fill="rgb(200,201,205)" stroke="rgb(200,201,205)" stroke-width=".25">Th</text>
<path d="M708.6 136 C704.1 121 690.1 108.5 690.1 93.5 A18.5 18.5 0 1 1 727.1 93.5 C727.1 108.5 713.1 121 708.6 136 Z" fill="rgb(48,120,40)" stroke="rgb(37,95,33)" stroke-width="1.6"/><text x="708.6" y="114.6" font-size="13.3" fill="rgb(200,201,205)" stroke="rgb(200,201,205)" stroke-width=".25">Th</text><circle cx="721" cy="75.4" r="10.2" fill="rgb(137,36,121)"/><rect x="715.4" y="74.1" width="3.9" height="2.800" fill="rgb(196,196,204)"/><rect x="721.8" y="74.1" width="3.900" height="2.800" fill="rgb(196,196,204)"/>
<path d="M447 137 C442.5 122 428.5 109.5 428.5 94.5 A18.5 18.5 0 1 1 465.5 94.5 C465.5 109.5 451.5 122 447 137 Z" fill="rgb(108,126,54)" stroke="rgb(86,101,45)" stroke-width="1.6"/><text x="447" y="99.6" font-size="20.3" fill="rgb(200,201,205)" stroke="rgb(200,201,205)" stroke-width=".35">11</text><text x="447" y="115.6" font-size="13.3" fill="rgb(200,201,205)" stroke="rgb(200,201,205)" stroke-width=".25">Th</text><circle cx="462" cy="76" r="10.2" fill="rgb(137,36,121)"/><rect x="456.4" y="74.7" width="3.9" height="2.800" fill="rgb(196,196,204)"/><rect x="462.8" y="74.7" width="3.900" height="2.800" fill="rgb(196,196,204)"/>
<path d="M696.3 138 C691.8 123 677.8 110.5 677.8 95.5 A18.5 18.5 0 1 1 714.8 95.5 C714.8 110.5 700.8 123 696.3 138 Z" fill="rgb(48,120,40)" stroke="rgb(37,95,33)" stroke-width="1.6"/><text x="696.3" y="100.6" font-size="20.3" fill="rgb(200,201,205)" stroke="rgb(200,201,205)" stroke-width=".35">7</text><text x="696.3" y="116.6" font-size="13.3" fill="rgb(200,201,205)" stroke="rgb(200,201,205)" stroke-width=".25">Th</text><circle cx="712.4" cy="80" r="10.2" fill="rgb(137,36,121)"/><rect x="706.8" y="78.7" width="3.9" height="2.800" fill="rgb(196,196,204)"/><rect x="713.2" y="78.7" width="3.900" height="2.800" fill="rgb(196,196,204)"/>
<path d="M667.7 202.7 C663.2 187.7 649.2 175.2 649.2 160.2 A18.5 18.5 0 1 1 686.2 160.2 C686.2 175.2 672.2 187.7 667.7 202.7 Z" fill="rgb(52,95,138)" stroke="rgb(40,76,114)" stroke-width="1.6"/><text x="667.7" y="165.3" font-size="20.3" fill="rgb(200,201,205)" stroke="rgb(200,201,205)" stroke-width=".35">2</text><text x="667.7" y="181.3" font-size="13.3" fill="rgb(200,201,205)" stroke="rgb(200,201,205)" stroke-width=".25">Th</text><circle cx="683" cy="142.5" r="10.2" fill="rgb(137,36,121)"/><rect x="677.4" y="141.2" width="3.9" height="2.800" fill="rgb(196,196,204)"/><rect x="683.8" y="141.2" width="3.900" height="2.800" fill="rgb(196,196,204)"/>
<path d="M672 226 C667.5 211 653.5 198.5 653.5 183.5 A18.5 18.5 0 1 1 690.5 183.5 C690.5 198.5 676.5 211 672 226 Z" fill="rgb(172,162,54)" stroke="rgb(140,130,46)" stroke-width="1.6"/><text x="672" y="204.6" font-size="13.3" fill="rgb(200,201,205)" stroke="rgb(200,201,205)" stroke-width=".25">Th</text><circle cx="687.7" cy="166" r="10.2" fill="rgb(137,36,121)"/><rect x="682.1" y="164.7" width="3.9" height="2.800" fill="rgb(196,196,204)"/><rect x="688.5" y="164.7" width="3.900" height="2.800" fill="rgb(196,196,204)"/>
<path d="M666 233.5 C661.5 218.5 647.5 206 647.5 191 A18.5 18.5 0 1 1 684.5 191 C684.5 206 670.5 218.5 666 233.5 Z" fill="rgb(176,82,44)" stroke="rgb(142,64,36)" stroke-width="1.6"/><text x="666" y="196.1" font-size="20.3" fill="rgb(200,201,205)" stroke="rgb(200,201,205)" stroke-width=".35">3</text><text x="666" y="212.1" font-size="13.3" fill="rgb(200,201,205)" stroke="rgb(200,201,205)" stroke-width=".25">Th</text><circle cx="682" cy="172" r="10.2" fill="rgb(137,36,121)"/><rect x="676.4" y="170.7" width="3.9" height="2.800" fill="rgb(196,196,204)"/><rect x="682.8" y="170.7" width="3.900" height="2.800" fill="rgb(196,196,204)"/>
<path d="M729.7 247 C725.2 232 711.2 219.5 711.2 204.5 A18.5 18.5 0 1 1 748.2 204.5 C748.2 219.5 734.2 232 729.7 247 Z" fill="rgb(176,82,44)" stroke="rgb(142,64,36)" stroke-width="1.6"/><text x="729.7" y="209.6" font-size="20.3" fill="rgb(200,201,205)" stroke="rgb(200,201,205)" stroke-width=".35">10</text><text x="729.7" y="225.6" font-size="13.3" fill="rgb(200,201,205)" stroke="rgb(200,201,205)" stroke-width=".25">Th</text><circle cx="745" cy="187.5" r="10.2" fill="rgb(137,36,121)"/><rect x="739.4" y="186.2" width="3.9" height="2.800" fill="rgb(196,196,204)"/><rect x="745.8" y="186.2" width="3.900" height="2.800" fill="rgb(196,196,204)"/>
<path d="M846.4 253.3 C841.9 238.3 827.9 225.8 827.9 210.8 A18.5 18.5 0 1 1 864.9 210.8 C864.9 225.8 850.9 238.3 846.4 253.3 Z" fill="rgb(64,36,168)" stroke="rgb(48,28,134)" stroke-width="1.6"/><text x="846.4" y="215.9" font-size="20.3" fill="rgb(200,201,205)" stroke="rgb(200,201,205)" stroke-width=".35">11</text><text x="846.4" y="231.9" font-size="13.3" fill="rgb(200,201,205)" stroke="rgb(200,201,205)" stroke-width=".25">Th</text><circle cx="861.7" cy="193.2" r="10.2" fill="rgb(137,36,121)"/><rect x="856.1" y="191.9" width="3.9" height="2.800" fill="rgb(196,196,204)"/><rect x="862.5" y="191.9" width="3.900" height="2.800" fill="rgb(196,196,204)"/>
<path d="M657.7 278 C653.2 263 639.2 250.5 639.2 235.5 A18.5 18.5 0 1 1 676.2 235.5 C676.2 250.5 662.2 263 657.7 278 Z" fill="rgb(172,162,54)" stroke="rgb(140,130,46)" stroke-width="1.6"/><text x="657.7" y="240.6" font-size="20.3" fill="rgb(200,201,205)" stroke="rgb(200,201,205)" stroke-width=".35">5</text><text x="657.7" y="256.6" font-size="13.3" fill="rgb(200,201,205)" stroke="rgb(200,201,205)" stroke-width=".25">Th</text><circle cx="673.5" cy="218" r="10.2" fill="rgb(137,36,121)"/><rect x="667.9" y="216.7" width="3.9" height="2.800" fill="rgb(196,196,204)"/><rect x="674.3" y="216.7" width="3.900" height="2.800" fill="rgb(196,196,204)"/>
<path d="M804 317 C799.5 302 785.5 289.5 785.5 274.5 A18.5 18.5 0 1 1 822.5 274.5 C822.5 289.5 808.5 302 804 317 Z" fill="rgb(44,94,146)" stroke="rgb(60,114,164)" stroke-width="1.6"/><circle cx="804" cy="275" r="6.2" fill="rgb(203,207,213)"/><circle cx="819.7" cy="257" r="10.2" fill="rgb(137,36,121)"/><rect x="814.1" y="255.7" width="3.9" height="2.800" fill="rgb(196,196,204)"/><rect x="820.5" y="255.7" width="3.900" height="2.800" fill="rgb(196,196,204)"/>
<path d="M689.5 352 C685 337 671 324.5 671 309.5 A18.5 18.5 0 1 1 708 309.5 C708 324.5 694 337 689.5 352 Z" fill="rgb(176,82,44)" stroke="rgb(142,64,36)" stroke-width="1.6"/><text x="689.5" y="314.6" font-size="20.3" fill="rgb(200,201,205)" stroke="rgb(200,201,205)" stroke-width=".35">8</text><text x="689.5" y="330.6" font-size="13.3" fill="rgb(200,201,205)" stroke="rgb(200,201,205)" stroke-width=".25">Th</text><circle cx="705" cy="292.3" r="10.2" fill="rgb(137,36,121)"/><rect x="699.4" y="291" width="3.9" height="2.800" fill="rgb(196,196,204)"/><rect x="705.8" y="291" width="3.900" height="2.800" fill="rgb(196,196,204)"/>
<path d="M604.5 376 C600 361 586 348.5 586 333.5 A18.5 18.5 0 1 1 623 333.5 C623 348.5 609 361 604.5 376 Z" fill="rgb(52,95,138)" stroke="rgb(40,76,114)" stroke-width="1.6"/><text x="604.5" y="338.6" font-size="20.3" fill="rgb(200,201,205)" stroke="rgb(200,201,205)" stroke-width=".35">11</text><text x="604.5" y="354.6" font-size="13.3" fill="rgb(200,201,205)" stroke="rgb(200,201,205)" stroke-width=".25">Th</text><circle cx="620" cy="316" r="10.2" fill="rgb(137,36,121)"/><rect x="614.4" y="314.7" width="3.9" height="2.800" fill="rgb(196,196,204)"/><rect x="620.8" y="314.7" width="3.900" height="2.800" fill="rgb(196,196,204)"/>
<path d="M846.4 392 C841.9 377 827.9 364.5 827.9 349.5 A18.5 18.5 0 1 1 864.9 349.5 C864.9 364.5 850.9 377 846.4 392 Z" fill="rgb(64,36,168)" stroke="rgb(48,28,134)" stroke-width="1.6"/><text x="846.4" y="354.6" font-size="20.3" fill="rgb(200,201,205)" stroke="rgb(200,201,205)" stroke-width=".35">9</text><text x="846.4" y="370.6" font-size="13.3" fill="rgb(200,201,205)" stroke="rgb(200,201,205)" stroke-width=".25">Th</text><circle cx="861.7" cy="332.5" r="10.2" fill="rgb(137,36,121)"/><rect x="856.1" y="331.2" width="3.9" height="2.800" fill="rgb(196,196,204)"/><rect x="862.5" y="331.2" width="3.900" height="2.800" fill="rgb(196,196,204)"/>
<path d="M682 413 C677.5 398 663.5 385.5 663.5 370.5 A18.5 18.5 0 1 1 700.5 370.5 C700.5 385.5 686.5 398 682 413 Z" fill="rgb(176,82,44)" stroke="rgb(142,64,36)" stroke-width="1.6"/><text x="682" y="375.6" font-size="20.3" fill="rgb(200,201,205)" stroke="rgb(200,201,205)" stroke-width=".35">6</text><text x="682" y="391.6" font-size="13.3" fill="rgb(200,201,205)" stroke="rgb(200,201,205)" stroke-width=".25">Th</text><circle cx="697.8" cy="353.8" r="10.2" fill="rgb(137,36,121)"/><rect x="692.2" y="352.5" width="3.9" height="2.800" fill="rgb(196,196,204)"/><rect x="698.6" y="352.5" width="3.900" height="2.800" fill="rgb(196,196,204)"/>
</svg>
<!--MK_END-->
<!-- DIM OVERLAY with spotlight hole -->
<svg id="dim" class="abs" width="1694" height="1039" viewBox="0 0 1694 1039">
<path fill-rule="evenodd" fill="rgba(15,23,42,0.4)" d="M0 0H1694V1039H0Z M6 554H776V510Q776 507 779 507H1049.5Q1053.7 507 1053.7 511V1025Q1053.7 1030.2 1048.5 1030.2H6Q0 1030.2 0 1024V560Q0 554 6 554Z"/>
</svg>
</body>
</html>
